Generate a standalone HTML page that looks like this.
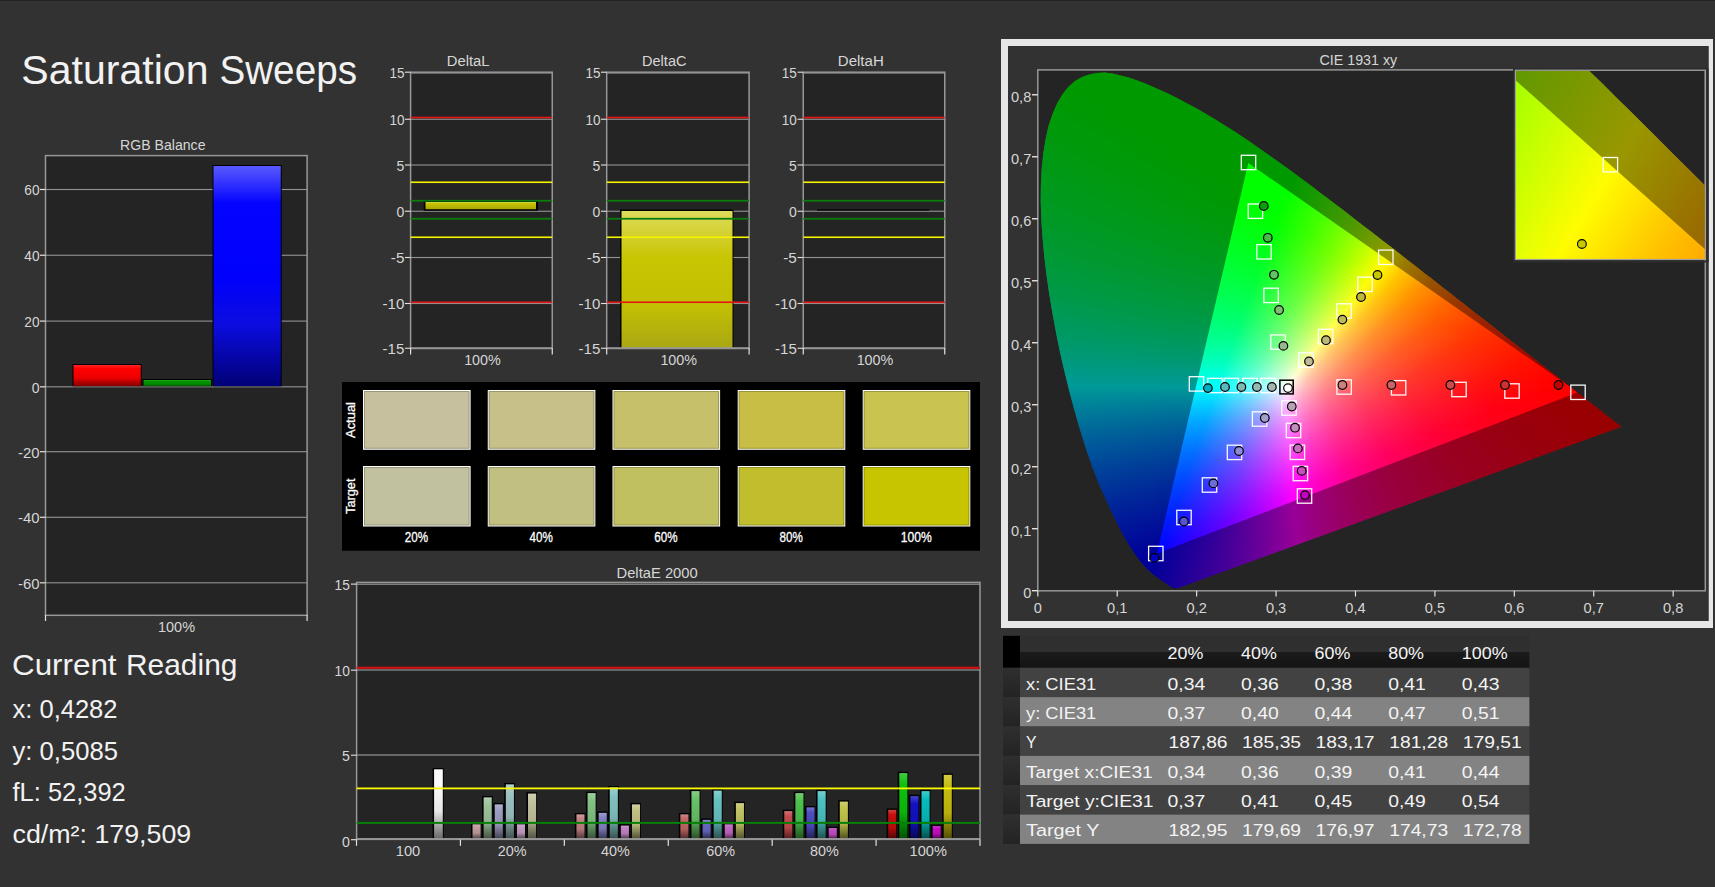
<!DOCTYPE html><html><head><meta charset="utf-8"><title>Saturation Sweeps</title><style>html,body{margin:0;padding:0;background:#323232;overflow:hidden}#p{position:relative;width:1715px;height:887px;overflow:hidden;background:#323232}.cg{position:absolute}.cg>div{position:absolute;left:0;width:100%}</style></head><body><div id="p"><svg width="1715" height="887" viewBox="0 0 1715 887" style="position:absolute;left:0;top:0;font-family:'Liberation Sans', sans-serif"><defs><linearGradient id="gR" x1="0" y1="0" x2="0" y2="1"><stop offset="0" stop-color="rgb(255,38,38)"/><stop offset=".18" stop-color="rgb(255,0,0)"/><stop offset=".6" stop-color="rgb(237,0,0)"/><stop offset="1" stop-color="rgb(128,0,0)"/></linearGradient><linearGradient id="gG" x1="0" y1="0" x2="0" y2="1"><stop offset="0" stop-color="rgb(51,171,51)"/><stop offset=".18" stop-color="rgb(0,150,0)"/><stop offset=".6" stop-color="rgb(0,139,0)"/><stop offset="1" stop-color="rgb(0,90,0)"/></linearGradient><linearGradient id="gB" x1="0" y1="0" x2="0" y2="1"><stop offset="0" stop-color="#5a5aff"/><stop offset=".17" stop-color="#0303ff"/><stop offset=".5" stop-color="#0000fd"/><stop offset=".72" stop-color="#0c0ce0"/><stop offset="1" stop-color="#000076"/></linearGradient><linearGradient id="gY" x1="0" y1="0" x2="0" y2="1"><stop offset="0" stop-color="rgb(220,218,97)"/><stop offset=".18" stop-color="rgb(199,196,0)"/><stop offset=".6" stop-color="rgb(185,182,0)"/><stop offset="1" stop-color="rgb(163,161,0)"/></linearGradient><linearGradient id="gYc" x1="0" y1="0" x2="0" y2="1"><stop offset="0" stop-color="#dedc5c"/><stop offset=".34" stop-color="#c8c503"/><stop offset=".68" stop-color="#c3c003"/><stop offset="1" stop-color="#a9a714"/></linearGradient><linearGradient id="e20r" x1="0" y1="0" x2="0" y2="1"><stop offset="0" stop-color="rgb(207,178,178)"/><stop offset=".18" stop-color="rgb(193,156,156)"/><stop offset=".6" stop-color="rgb(179,145,145)"/><stop offset="1" stop-color="rgb(81,66,66)"/></linearGradient><linearGradient id="e20g" x1="0" y1="0" x2="0" y2="1"><stop offset="0" stop-color="rgb(178,207,178)"/><stop offset=".18" stop-color="rgb(156,193,156)"/><stop offset=".6" stop-color="rgb(145,179,145)"/><stop offset="1" stop-color="rgb(66,81,66)"/></linearGradient><linearGradient id="e20b" x1="0" y1="0" x2="0" y2="1"><stop offset="0" stop-color="rgb(178,178,207)"/><stop offset=".18" stop-color="rgb(156,156,193)"/><stop offset=".6" stop-color="rgb(145,145,179)"/><stop offset="1" stop-color="rgb(66,66,81)"/></linearGradient><linearGradient id="e20c" x1="0" y1="0" x2="0" y2="1"><stop offset="0" stop-color="rgb(178,207,207)"/><stop offset=".18" stop-color="rgb(156,193,193)"/><stop offset=".6" stop-color="rgb(145,179,179)"/><stop offset="1" stop-color="rgb(66,81,81)"/></linearGradient><linearGradient id="e20m" x1="0" y1="0" x2="0" y2="1"><stop offset="0" stop-color="rgb(207,178,207)"/><stop offset=".18" stop-color="rgb(193,156,193)"/><stop offset=".6" stop-color="rgb(179,145,179)"/><stop offset="1" stop-color="rgb(81,66,81)"/></linearGradient><linearGradient id="e20y" x1="0" y1="0" x2="0" y2="1"><stop offset="0" stop-color="rgb(207,207,178)"/><stop offset=".18" stop-color="rgb(193,193,156)"/><stop offset=".6" stop-color="rgb(179,179,145)"/><stop offset="1" stop-color="rgb(81,81,66)"/></linearGradient><linearGradient id="e40r" x1="0" y1="0" x2="0" y2="1"><stop offset="0" stop-color="rgb(207,158,158)"/><stop offset=".18" stop-color="rgb(193,130,130)"/><stop offset=".6" stop-color="rgb(179,120,120)"/><stop offset="1" stop-color="rgb(81,55,55)"/></linearGradient><linearGradient id="e40g" x1="0" y1="0" x2="0" y2="1"><stop offset="0" stop-color="rgb(158,207,158)"/><stop offset=".18" stop-color="rgb(130,193,130)"/><stop offset=".6" stop-color="rgb(120,179,120)"/><stop offset="1" stop-color="rgb(55,81,55)"/></linearGradient><linearGradient id="e40b" x1="0" y1="0" x2="0" y2="1"><stop offset="0" stop-color="rgb(158,158,207)"/><stop offset=".18" stop-color="rgb(130,130,193)"/><stop offset=".6" stop-color="rgb(120,120,179)"/><stop offset="1" stop-color="rgb(55,55,81)"/></linearGradient><linearGradient id="e40c" x1="0" y1="0" x2="0" y2="1"><stop offset="0" stop-color="rgb(158,207,207)"/><stop offset=".18" stop-color="rgb(130,193,193)"/><stop offset=".6" stop-color="rgb(120,179,179)"/><stop offset="1" stop-color="rgb(55,81,81)"/></linearGradient><linearGradient id="e40m" x1="0" y1="0" x2="0" y2="1"><stop offset="0" stop-color="rgb(207,158,207)"/><stop offset=".18" stop-color="rgb(193,130,193)"/><stop offset=".6" stop-color="rgb(179,120,179)"/><stop offset="1" stop-color="rgb(81,55,81)"/></linearGradient><linearGradient id="e40y" x1="0" y1="0" x2="0" y2="1"><stop offset="0" stop-color="rgb(207,207,158)"/><stop offset=".18" stop-color="rgb(193,193,130)"/><stop offset=".6" stop-color="rgb(179,179,120)"/><stop offset="1" stop-color="rgb(81,81,55)"/></linearGradient><linearGradient id="e60r" x1="0" y1="0" x2="0" y2="1"><stop offset="0" stop-color="rgb(207,136,136)"/><stop offset=".18" stop-color="rgb(193,103,103)"/><stop offset=".6" stop-color="rgb(179,95,95)"/><stop offset="1" stop-color="rgb(81,43,43)"/></linearGradient><linearGradient id="e60g" x1="0" y1="0" x2="0" y2="1"><stop offset="0" stop-color="rgb(136,207,136)"/><stop offset=".18" stop-color="rgb(103,193,103)"/><stop offset=".6" stop-color="rgb(95,179,95)"/><stop offset="1" stop-color="rgb(43,81,43)"/></linearGradient><linearGradient id="e60b" x1="0" y1="0" x2="0" y2="1"><stop offset="0" stop-color="rgb(136,136,207)"/><stop offset=".18" stop-color="rgb(103,103,193)"/><stop offset=".6" stop-color="rgb(95,95,179)"/><stop offset="1" stop-color="rgb(43,43,81)"/></linearGradient><linearGradient id="e60c" x1="0" y1="0" x2="0" y2="1"><stop offset="0" stop-color="rgb(136,207,207)"/><stop offset=".18" stop-color="rgb(103,193,193)"/><stop offset=".6" stop-color="rgb(95,179,179)"/><stop offset="1" stop-color="rgb(43,81,81)"/></linearGradient><linearGradient id="e60m" x1="0" y1="0" x2="0" y2="1"><stop offset="0" stop-color="rgb(207,136,207)"/><stop offset=".18" stop-color="rgb(193,103,193)"/><stop offset=".6" stop-color="rgb(179,95,179)"/><stop offset="1" stop-color="rgb(81,43,81)"/></linearGradient><linearGradient id="e60y" x1="0" y1="0" x2="0" y2="1"><stop offset="0" stop-color="rgb(207,207,136)"/><stop offset=".18" stop-color="rgb(193,193,103)"/><stop offset=".6" stop-color="rgb(179,179,95)"/><stop offset="1" stop-color="rgb(81,81,43)"/></linearGradient><linearGradient id="e80r" x1="0" y1="0" x2="0" y2="1"><stop offset="0" stop-color="rgb(207,115,115)"/><stop offset=".18" stop-color="rgb(193,76,76)"/><stop offset=".6" stop-color="rgb(179,70,70)"/><stop offset="1" stop-color="rgb(81,32,32)"/></linearGradient><linearGradient id="e80g" x1="0" y1="0" x2="0" y2="1"><stop offset="0" stop-color="rgb(115,207,115)"/><stop offset=".18" stop-color="rgb(76,193,76)"/><stop offset=".6" stop-color="rgb(70,179,70)"/><stop offset="1" stop-color="rgb(32,81,32)"/></linearGradient><linearGradient id="e80b" x1="0" y1="0" x2="0" y2="1"><stop offset="0" stop-color="rgb(115,115,207)"/><stop offset=".18" stop-color="rgb(76,76,193)"/><stop offset=".6" stop-color="rgb(70,70,179)"/><stop offset="1" stop-color="rgb(32,32,81)"/></linearGradient><linearGradient id="e80c" x1="0" y1="0" x2="0" y2="1"><stop offset="0" stop-color="rgb(115,207,207)"/><stop offset=".18" stop-color="rgb(76,193,193)"/><stop offset=".6" stop-color="rgb(70,179,179)"/><stop offset="1" stop-color="rgb(32,81,81)"/></linearGradient><linearGradient id="e80m" x1="0" y1="0" x2="0" y2="1"><stop offset="0" stop-color="rgb(207,115,207)"/><stop offset=".18" stop-color="rgb(193,76,193)"/><stop offset=".6" stop-color="rgb(179,70,179)"/><stop offset="1" stop-color="rgb(81,32,81)"/></linearGradient><linearGradient id="e80y" x1="0" y1="0" x2="0" y2="1"><stop offset="0" stop-color="rgb(207,207,115)"/><stop offset=".18" stop-color="rgb(193,193,76)"/><stop offset=".6" stop-color="rgb(179,179,70)"/><stop offset="1" stop-color="rgb(81,81,32)"/></linearGradient><linearGradient id="e100r" x1="0" y1="0" x2="0" y2="1"><stop offset="0" stop-color="rgb(211,65,65)"/><stop offset=".18" stop-color="rgb(198,12,12)"/><stop offset=".6" stop-color="rgb(184,11,11)"/><stop offset="1" stop-color="rgb(83,5,5)"/></linearGradient><linearGradient id="e100g" x1="0" y1="0" x2="0" y2="1"><stop offset="0" stop-color="rgb(65,206,65)"/><stop offset=".18" stop-color="rgb(12,192,12)"/><stop offset=".6" stop-color="rgb(11,178,11)"/><stop offset="1" stop-color="rgb(5,81,5)"/></linearGradient><linearGradient id="e100b" x1="0" y1="0" x2="0" y2="1"><stop offset="0" stop-color="rgb(70,70,208)"/><stop offset=".18" stop-color="rgb(18,18,195)"/><stop offset=".6" stop-color="rgb(16,16,181)"/><stop offset="1" stop-color="rgb(8,8,82)"/></linearGradient><linearGradient id="e100c" x1="0" y1="0" x2="0" y2="1"><stop offset="0" stop-color="rgb(62,203,203)"/><stop offset=".18" stop-color="rgb(8,188,188)"/><stop offset=".6" stop-color="rgb(7,174,174)"/><stop offset="1" stop-color="rgb(3,79,79)"/></linearGradient><linearGradient id="e100m" x1="0" y1="0" x2="0" y2="1"><stop offset="0" stop-color="rgb(211,65,211)"/><stop offset=".18" stop-color="rgb(198,12,198)"/><stop offset=".6" stop-color="rgb(184,11,184)"/><stop offset="1" stop-color="rgb(83,5,83)"/></linearGradient><linearGradient id="e100y" x1="0" y1="0" x2="0" y2="1"><stop offset="0" stop-color="rgb(211,203,67)"/><stop offset=".18" stop-color="rgb(198,188,14)"/><stop offset=".6" stop-color="rgb(184,174,13)"/><stop offset="1" stop-color="rgb(83,79,6)"/></linearGradient><linearGradient id="eW" x1="0" y1="0" x2="0" y2="1"><stop offset="0" stop-color="rgb(250,250,250)"/><stop offset=".18" stop-color="rgb(250,250,250)"/><stop offset=".6" stop-color="rgb(232,232,232)"/><stop offset="1" stop-color="rgb(105,105,105)"/></linearGradient><linearGradient id="th" x1="0" y1="0" x2="0" y2="1"><stop offset="0" stop-color="#2e2e2e"/><stop offset=".49" stop-color="#303030"/><stop offset=".5" stop-color="#1b1b1b"/><stop offset="1" stop-color="#141414"/></linearGradient><linearGradient id="rh" x1="0" y1="0" x2="0" y2="1"><stop offset="0" stop-color="#2f2f2f"/><stop offset="1" stop-color="#232323"/></linearGradient></defs><rect x="0" y="0" width="1715" height="887" fill="#323232"/><rect x="0" y="0" width="1715" height="1" fill="#232323"/><text y="84.2" font-size="40" fill="#f2f2f2"><tspan x="21.3" textLength="198.6" lengthAdjust="spacingAndGlyphs">Saturation </tspan><tspan x="219.4" textLength="137.6" lengthAdjust="spacingAndGlyphs">Sweeps</tspan></text><rect x="45.5" y="155.6" width="261.6" height="459.7" fill="#242424"/><rect x="45.5" y="188.95" width="261.6" height="1.1" fill="#939393"/><rect x="45.5" y="254.7" width="261.6" height="1.1" fill="#939393"/><rect x="45.5" y="320.55" width="261.6" height="1.1" fill="#939393"/><rect x="45.5" y="386.25" width="261.6" height="1.1" fill="#939393"/><rect x="45.5" y="451.15" width="261.6" height="1.1" fill="#939393"/><rect x="45.5" y="516.75" width="261.6" height="1.1" fill="#939393"/><rect x="45.5" y="582.25" width="261.6" height="1.1" fill="#939393"/><rect x="72.5" y="364" width="69.25" height="22.2" fill="#000"/><rect x="73.5" y="365" width="67.25" height="21.2" fill="url(#gR)"/><rect x="142.5" y="379" width="69.5" height="7.2" fill="#000"/><rect x="143.5" y="380" width="67.5" height="6.2" fill="url(#gG)"/><rect x="212.5" y="165" width="69.25" height="221.2" fill="#000"/><rect x="213.5" y="166" width="67.25" height="220.2" fill="url(#gB)"/><rect x="45.5" y="155.6" width="261.6" height="459.7" fill="none" stroke="#979797" stroke-width="1.5"/><rect x="40" y="188.9" width="5.5" height="1.2" fill="#e2e2e2"/><text x="24.3" y="195.3" font-size="15.2" fill="#d6d6d6" textLength="15.2" lengthAdjust="spacingAndGlyphs">60</text><rect x="40" y="254.65" width="5.5" height="1.2" fill="#e2e2e2"/><text x="24.3" y="261.05" font-size="15.2" fill="#d6d6d6" textLength="15.2" lengthAdjust="spacingAndGlyphs">40</text><rect x="40" y="320.5" width="5.5" height="1.2" fill="#e2e2e2"/><text x="24.3" y="326.9" font-size="15.2" fill="#d6d6d6" textLength="15.2" lengthAdjust="spacingAndGlyphs">20</text><rect x="40" y="386.2" width="5.5" height="1.2" fill="#e2e2e2"/><text x="31.7" y="392.6" font-size="15.2" fill="#d6d6d6" textLength="7.8" lengthAdjust="spacingAndGlyphs">0</text><rect x="40" y="451.1" width="5.5" height="1.2" fill="#e2e2e2"/><text x="18" y="457.5" font-size="15.2" fill="#d6d6d6" textLength="21.5" lengthAdjust="spacingAndGlyphs">-20</text><rect x="40" y="516.7" width="5.5" height="1.2" fill="#e2e2e2"/><text x="18" y="523.1" font-size="15.2" fill="#d6d6d6" textLength="21.5" lengthAdjust="spacingAndGlyphs">-40</text><rect x="40" y="582.2" width="5.5" height="1.2" fill="#e2e2e2"/><text x="18" y="588.6" font-size="15.2" fill="#d6d6d6" textLength="21.5" lengthAdjust="spacingAndGlyphs">-60</text><rect x="44.9" y="615" width="1.2" height="6" fill="#e2e2e2"/><rect x="306.5" y="615" width="1.2" height="6" fill="#e2e2e2"/><text x="158" y="632" font-size="15" fill="#d6d6d6" textLength="37" lengthAdjust="spacingAndGlyphs">100%</text><text x="120" y="150" font-size="15.2" fill="#d6d6d6" textLength="85.5" lengthAdjust="spacingAndGlyphs">RGB Balance</text><text y="675" font-size="30" fill="#f2f2f2"><tspan x="12" textLength="113.3" lengthAdjust="spacingAndGlyphs">Current </tspan><tspan x="126" textLength="111.4" lengthAdjust="spacingAndGlyphs">Reading</tspan></text><text x="12.5" y="717.5" font-size="25" fill="#f2f2f2" textLength="105" lengthAdjust="spacingAndGlyphs">x: 0,4282</text><text x="12.5" y="759.5" font-size="25" fill="#f2f2f2" textLength="105.5" lengthAdjust="spacingAndGlyphs">y: 0,5085</text><text x="12.5" y="801.25" font-size="25" fill="#f2f2f2" textLength="113.25" lengthAdjust="spacingAndGlyphs">fL: 52,392</text><text x="12.5" y="843.25" font-size="25" fill="#f2f2f2" textLength="178.75" lengthAdjust="spacingAndGlyphs">cd/m²: 179,509</text><rect x="410.6" y="72.2" width="141.65" height="276.05" fill="#242424"/><rect x="410.6" y="72.6" width="141.65" height="1" fill="#939393"/><rect x="410.6" y="118.7" width="141.65" height="1.1" fill="#939393"/><rect x="410.6" y="164.45" width="141.65" height="1.1" fill="#939393"/><rect x="410.6" y="210.7" width="141.65" height="1.1" fill="#939393"/><rect x="410.6" y="256.95" width="141.65" height="1.1" fill="#939393"/><rect x="410.6" y="302.95" width="141.65" height="1.1" fill="#939393"/><rect x="423.75" y="200.75" width="114.25" height="10" fill="#000"/><rect x="425.5" y="202" width="110.5" height="7.25" fill="url(#gY)"/><rect x="410.6" y="72.2" width="141.65" height="276.05" fill="none" stroke="#979797" stroke-width="1.5"/><rect x="410.6" y="347.35" width="141.65" height="1.9" fill="#979797"/><rect x="410.6" y="116.7" width="141.65" height="1.6" fill="#e31616"/><rect x="410.6" y="301.45" width="141.65" height="1.6" fill="#e31616"/><rect x="410.6" y="181.45" width="141.65" height="1.6" fill="#f4f400"/><rect x="410.6" y="236.45" width="141.65" height="1.6" fill="#f4f400"/><rect x="410.6" y="199.85" width="141.65" height="1.8" fill="#0c7d0c"/><rect x="410.6" y="217.85" width="141.65" height="1.8" fill="#0c7d0c"/><rect x="404.9" y="71.65" width="5.7" height="1.1" fill="#e2e2e2"/><text x="389.4" y="77.9" font-size="15.2" fill="#d6d6d6" textLength="15" lengthAdjust="spacingAndGlyphs">15</text><rect x="404.9" y="118.7" width="5.7" height="1.1" fill="#e2e2e2"/><text x="389.4" y="124.95" font-size="15.2" fill="#d6d6d6" textLength="15" lengthAdjust="spacingAndGlyphs">10</text><rect x="404.9" y="164.45" width="5.7" height="1.1" fill="#e2e2e2"/><text x="396.6" y="170.7" font-size="15.2" fill="#d6d6d6" textLength="7.8" lengthAdjust="spacingAndGlyphs">5</text><rect x="404.9" y="210.7" width="5.7" height="1.1" fill="#e2e2e2"/><text x="396.6" y="216.95" font-size="15.2" fill="#d6d6d6" textLength="7.8" lengthAdjust="spacingAndGlyphs">0</text><rect x="404.9" y="256.95" width="5.7" height="1.1" fill="#e2e2e2"/><text x="390.8" y="263.2" font-size="15.2" fill="#d6d6d6" textLength="13.6" lengthAdjust="spacingAndGlyphs">-5</text><rect x="404.9" y="302.95" width="5.7" height="1.1" fill="#e2e2e2"/><text x="382.6" y="309.2" font-size="15.2" fill="#d6d6d6" textLength="21.8" lengthAdjust="spacingAndGlyphs">-10</text><rect x="404.9" y="347.7" width="5.7" height="1.1" fill="#e2e2e2"/><text x="382.6" y="353.95" font-size="15.2" fill="#d6d6d6" textLength="21.8" lengthAdjust="spacingAndGlyphs">-15</text><rect x="410" y="348" width="1.2" height="6.5" fill="#e2e2e2"/><rect x="551.65" y="348" width="1.2" height="6.5" fill="#e2e2e2"/><text x="446.75" y="66.2" font-size="15.3" fill="#d6d6d6" textLength="42.75" lengthAdjust="spacingAndGlyphs">DeltaL</text><text x="464.15" y="364.8" font-size="15" fill="#d6d6d6" textLength="36.7" lengthAdjust="spacingAndGlyphs">100%</text><rect x="606.7" y="72.2" width="142.4" height="276.05" fill="#242424"/><rect x="606.7" y="72.6" width="142.4" height="1" fill="#939393"/><rect x="606.7" y="118.7" width="142.4" height="1.1" fill="#939393"/><rect x="606.7" y="164.45" width="142.4" height="1.1" fill="#939393"/><rect x="606.7" y="210.7" width="142.4" height="1.1" fill="#939393"/><rect x="606.7" y="256.95" width="142.4" height="1.1" fill="#939393"/><rect x="606.7" y="302.95" width="142.4" height="1.1" fill="#939393"/><rect x="620" y="209.5" width="113.5" height="138.75" fill="#000"/><rect x="621.5" y="211" width="111" height="137.25" fill="url(#gYc)"/><rect x="606.7" y="72.2" width="142.4" height="276.05" fill="none" stroke="#979797" stroke-width="1.5"/><rect x="606.7" y="347.35" width="142.4" height="1.9" fill="#979797"/><rect x="606.7" y="116.7" width="142.4" height="1.6" fill="#e31616"/><rect x="606.7" y="301.45" width="142.4" height="1.6" fill="#e31616"/><rect x="606.7" y="181.45" width="142.4" height="1.6" fill="#f4f400"/><rect x="606.7" y="236.45" width="142.4" height="1.6" fill="#f4f400"/><rect x="606.7" y="199.85" width="142.4" height="1.8" fill="#0c7d0c"/><rect x="606.7" y="217.85" width="142.4" height="1.8" fill="#0c7d0c"/><rect x="601" y="71.65" width="5.7" height="1.1" fill="#e2e2e2"/><text x="585.4" y="77.9" font-size="15.2" fill="#d6d6d6" textLength="15" lengthAdjust="spacingAndGlyphs">15</text><rect x="601" y="118.7" width="5.7" height="1.1" fill="#e2e2e2"/><text x="585.4" y="124.95" font-size="15.2" fill="#d6d6d6" textLength="15" lengthAdjust="spacingAndGlyphs">10</text><rect x="601" y="164.45" width="5.7" height="1.1" fill="#e2e2e2"/><text x="592.6" y="170.7" font-size="15.2" fill="#d6d6d6" textLength="7.8" lengthAdjust="spacingAndGlyphs">5</text><rect x="601" y="210.7" width="5.7" height="1.1" fill="#e2e2e2"/><text x="592.6" y="216.95" font-size="15.2" fill="#d6d6d6" textLength="7.8" lengthAdjust="spacingAndGlyphs">0</text><rect x="601" y="256.95" width="5.7" height="1.1" fill="#e2e2e2"/><text x="586.8" y="263.2" font-size="15.2" fill="#d6d6d6" textLength="13.6" lengthAdjust="spacingAndGlyphs">-5</text><rect x="601" y="302.95" width="5.7" height="1.1" fill="#e2e2e2"/><text x="578.6" y="309.2" font-size="15.2" fill="#d6d6d6" textLength="21.8" lengthAdjust="spacingAndGlyphs">-10</text><rect x="601" y="347.7" width="5.7" height="1.1" fill="#e2e2e2"/><text x="578.6" y="353.95" font-size="15.2" fill="#d6d6d6" textLength="21.8" lengthAdjust="spacingAndGlyphs">-15</text><rect x="606.1" y="348" width="1.2" height="6.5" fill="#e2e2e2"/><rect x="748.5" y="348" width="1.2" height="6.5" fill="#e2e2e2"/><text x="642" y="66.2" font-size="15.3" fill="#d6d6d6" textLength="44.5" lengthAdjust="spacingAndGlyphs">DeltaC</text><text x="660.4" y="364.8" font-size="15" fill="#d6d6d6" textLength="36.7" lengthAdjust="spacingAndGlyphs">100%</text><rect x="803.25" y="72.2" width="141.5" height="276.05" fill="#242424"/><rect x="803.25" y="72.6" width="141.5" height="1" fill="#939393"/><rect x="803.25" y="118.7" width="141.5" height="1.1" fill="#939393"/><rect x="803.25" y="164.45" width="141.5" height="1.1" fill="#939393"/><rect x="803.25" y="210.7" width="141.5" height="1.1" fill="#939393"/><rect x="803.25" y="256.95" width="141.5" height="1.1" fill="#939393"/><rect x="803.25" y="302.95" width="141.5" height="1.1" fill="#939393"/><rect x="817" y="209.4" width="112.25" height="1.2" fill="#000"/><rect x="803.25" y="72.2" width="141.5" height="276.05" fill="none" stroke="#979797" stroke-width="1.5"/><rect x="803.25" y="347.35" width="141.5" height="1.9" fill="#979797"/><rect x="803.25" y="116.7" width="141.5" height="1.6" fill="#e31616"/><rect x="803.25" y="301.45" width="141.5" height="1.6" fill="#e31616"/><rect x="803.25" y="181.45" width="141.5" height="1.6" fill="#f4f400"/><rect x="803.25" y="236.45" width="141.5" height="1.6" fill="#f4f400"/><rect x="803.25" y="199.85" width="141.5" height="1.8" fill="#0c7d0c"/><rect x="803.25" y="217.85" width="141.5" height="1.8" fill="#0c7d0c"/><rect x="797.55" y="71.65" width="5.7" height="1.1" fill="#e2e2e2"/><text x="781.8" y="77.9" font-size="15.2" fill="#d6d6d6" textLength="15" lengthAdjust="spacingAndGlyphs">15</text><rect x="797.55" y="118.7" width="5.7" height="1.1" fill="#e2e2e2"/><text x="781.8" y="124.95" font-size="15.2" fill="#d6d6d6" textLength="15" lengthAdjust="spacingAndGlyphs">10</text><rect x="797.55" y="164.45" width="5.7" height="1.1" fill="#e2e2e2"/><text x="789" y="170.7" font-size="15.2" fill="#d6d6d6" textLength="7.8" lengthAdjust="spacingAndGlyphs">5</text><rect x="797.55" y="210.7" width="5.7" height="1.1" fill="#e2e2e2"/><text x="789" y="216.95" font-size="15.2" fill="#d6d6d6" textLength="7.8" lengthAdjust="spacingAndGlyphs">0</text><rect x="797.55" y="256.95" width="5.7" height="1.1" fill="#e2e2e2"/><text x="783.2" y="263.2" font-size="15.2" fill="#d6d6d6" textLength="13.6" lengthAdjust="spacingAndGlyphs">-5</text><rect x="797.55" y="302.95" width="5.7" height="1.1" fill="#e2e2e2"/><text x="775" y="309.2" font-size="15.2" fill="#d6d6d6" textLength="21.8" lengthAdjust="spacingAndGlyphs">-10</text><rect x="797.55" y="347.7" width="5.7" height="1.1" fill="#e2e2e2"/><text x="775" y="353.95" font-size="15.2" fill="#d6d6d6" textLength="21.8" lengthAdjust="spacingAndGlyphs">-15</text><rect x="802.65" y="348" width="1.2" height="6.5" fill="#e2e2e2"/><rect x="944.15" y="348" width="1.2" height="6.5" fill="#e2e2e2"/><text x="837.8" y="66.2" font-size="15.3" fill="#d6d6d6" textLength="46" lengthAdjust="spacingAndGlyphs">DeltaH</text><text x="856.65" y="364.8" font-size="15" fill="#d6d6d6" textLength="36.7" lengthAdjust="spacingAndGlyphs">100%</text><rect x="342" y="382" width="638" height="168.75" fill="#000"/><rect x="363.5" y="390.5" width="106.6" height="58.75" fill="#c6c09f" stroke="#fff" stroke-width="1"/><rect x="364.5" y="391.5" width="104.6" height="56.75" fill="none" stroke="#000" stroke-opacity=".22" stroke-width="1"/><rect x="363.5" y="466.5" width="106.6" height="59.5" fill="#c1c19f" stroke="#fff" stroke-width="1"/><rect x="364.5" y="467.5" width="104.6" height="57.5" fill="none" stroke="#000" stroke-opacity=".22" stroke-width="1"/><text x="404.85" y="542" font-size="14" fill="#fff" textLength="23.3" lengthAdjust="spacingAndGlyphs" stroke="#fff" stroke-width=".3">20%</text><rect x="488.25" y="390.5" width="106.6" height="58.75" fill="#c7c088" stroke="#fff" stroke-width="1"/><rect x="489.25" y="391.5" width="104.6" height="56.75" fill="none" stroke="#000" stroke-opacity=".22" stroke-width="1"/><rect x="488.25" y="466.5" width="106.6" height="59.5" fill="#c1c080" stroke="#fff" stroke-width="1"/><rect x="489.25" y="467.5" width="104.6" height="57.5" fill="none" stroke="#000" stroke-opacity=".22" stroke-width="1"/><text x="529.6" y="542" font-size="14" fill="#fff" textLength="23.3" lengthAdjust="spacingAndGlyphs" stroke="#fff" stroke-width=".3">40%</text><rect x="613" y="390.5" width="106.6" height="58.75" fill="#c7c06a" stroke="#fff" stroke-width="1"/><rect x="614" y="391.5" width="104.6" height="56.75" fill="none" stroke="#000" stroke-opacity=".22" stroke-width="1"/><rect x="613" y="466.5" width="106.6" height="59.5" fill="#c1c060" stroke="#fff" stroke-width="1"/><rect x="614" y="467.5" width="104.6" height="57.5" fill="none" stroke="#000" stroke-opacity=".22" stroke-width="1"/><text x="654.35" y="542" font-size="14" fill="#fff" textLength="23.3" lengthAdjust="spacingAndGlyphs" stroke="#fff" stroke-width=".3">60%</text><rect x="738.2" y="390.5" width="106.6" height="58.75" fill="#c8be45" stroke="#fff" stroke-width="1"/><rect x="739.2" y="391.5" width="104.6" height="56.75" fill="none" stroke="#000" stroke-opacity=".22" stroke-width="1"/><rect x="738.2" y="466.5" width="106.6" height="59.5" fill="#c1be2e" stroke="#fff" stroke-width="1"/><rect x="739.2" y="467.5" width="104.6" height="57.5" fill="none" stroke="#000" stroke-opacity=".22" stroke-width="1"/><text x="779.55" y="542" font-size="14" fill="#fff" textLength="23.3" lengthAdjust="spacingAndGlyphs" stroke="#fff" stroke-width=".3">80%</text><rect x="863.2" y="390.5" width="106.6" height="58.75" fill="#c9c350" stroke="#fff" stroke-width="1"/><rect x="864.2" y="391.5" width="104.6" height="56.75" fill="none" stroke="#000" stroke-opacity=".22" stroke-width="1"/><rect x="863.2" y="466.5" width="106.6" height="59.5" fill="#c7c400" stroke="#fff" stroke-width="1"/><rect x="864.2" y="467.5" width="104.6" height="57.5" fill="none" stroke="#000" stroke-opacity=".22" stroke-width="1"/><text x="900.7" y="542" font-size="14" fill="#fff" textLength="31" lengthAdjust="spacingAndGlyphs" stroke="#fff" stroke-width=".3">100%</text><text transform="translate(355.3,438) rotate(-90)" font-size="13.3" fill="#fff" stroke="#fff" stroke-width=".3" textLength="36" lengthAdjust="spacingAndGlyphs">Actual</text><text transform="translate(355.3,514) rotate(-90)" font-size="13.3" fill="#fff" stroke="#fff" stroke-width=".3" textLength="35.5" lengthAdjust="spacingAndGlyphs">Target</text><rect x="356.6" y="582.4" width="623.4" height="256.7" fill="#242424"/><rect x="356.6" y="583.6" width="623.4" height="1.2" fill="#939393"/><rect x="356.6" y="669.4" width="623.4" height="1.2" fill="#939393"/><rect x="356.6" y="754.4" width="623.4" height="1.2" fill="#939393"/><rect x="470.92" y="822.95" width="10.6" height="15.65" fill="#000"/><rect x="472.52" y="824.35" width="8.1" height="14.25" fill="url(#e20r)"/><rect x="482.02" y="795.95" width="10.6" height="42.65" fill="#000"/><rect x="483.62" y="797.35" width="8.1" height="41.25" fill="url(#e20g)"/><rect x="493.12" y="802.95" width="10.6" height="35.65" fill="#000"/><rect x="494.72" y="804.35" width="8.1" height="34.25" fill="url(#e20b)"/><rect x="504.22" y="782.95" width="10.6" height="55.65" fill="#000"/><rect x="505.82" y="784.35" width="8.1" height="54.25" fill="url(#e20c)"/><rect x="515.32" y="822.95" width="10.6" height="15.65" fill="#000"/><rect x="516.92" y="824.35" width="8.1" height="14.25" fill="url(#e20m)"/><rect x="526.42" y="792.2" width="10.6" height="46.4" fill="#000"/><rect x="528.02" y="793.6" width="8.1" height="45" fill="url(#e20y)"/><rect x="574.84" y="812.95" width="10.6" height="25.65" fill="#000"/><rect x="576.44" y="814.35" width="8.1" height="24.25" fill="url(#e40r)"/><rect x="585.94" y="791.7" width="10.6" height="46.9" fill="#000"/><rect x="587.54" y="793.1" width="8.1" height="45.5" fill="url(#e40g)"/><rect x="597.04" y="811.45" width="10.6" height="27.15" fill="#000"/><rect x="598.64" y="812.85" width="8.1" height="25.75" fill="url(#e40b)"/><rect x="608.14" y="785.95" width="10.6" height="52.65" fill="#000"/><rect x="609.74" y="787.35" width="8.1" height="51.25" fill="url(#e40c)"/><rect x="619.24" y="824.2" width="10.6" height="14.4" fill="#000"/><rect x="620.84" y="825.6" width="8.1" height="13" fill="url(#e40m)"/><rect x="630.34" y="802.95" width="10.6" height="35.65" fill="#000"/><rect x="631.94" y="804.35" width="8.1" height="34.25" fill="url(#e40y)"/><rect x="678.76" y="812.95" width="10.6" height="25.65" fill="#000"/><rect x="680.36" y="814.35" width="8.1" height="24.25" fill="url(#e60r)"/><rect x="689.86" y="789.7" width="10.6" height="48.9" fill="#000"/><rect x="691.46" y="791.1" width="8.1" height="47.5" fill="url(#e60g)"/><rect x="700.96" y="818.45" width="10.6" height="20.15" fill="#000"/><rect x="702.56" y="819.85" width="8.1" height="18.75" fill="url(#e60b)"/><rect x="712.06" y="789.2" width="10.6" height="49.4" fill="#000"/><rect x="713.66" y="790.6" width="8.1" height="48" fill="url(#e60c)"/><rect x="723.16" y="822.95" width="10.6" height="15.65" fill="#000"/><rect x="724.76" y="824.35" width="8.1" height="14.25" fill="url(#e60m)"/><rect x="734.26" y="801.7" width="10.6" height="36.9" fill="#000"/><rect x="735.86" y="803.1" width="8.1" height="35.5" fill="url(#e60y)"/><rect x="782.68" y="809.7" width="10.6" height="28.9" fill="#000"/><rect x="784.28" y="811.1" width="8.1" height="27.5" fill="url(#e80r)"/><rect x="793.78" y="791.7" width="10.6" height="46.9" fill="#000"/><rect x="795.38" y="793.1" width="8.1" height="45.5" fill="url(#e80g)"/><rect x="804.88" y="805.95" width="10.6" height="32.65" fill="#000"/><rect x="806.48" y="807.35" width="8.1" height="31.25" fill="url(#e80b)"/><rect x="815.98" y="789.7" width="10.6" height="48.9" fill="#000"/><rect x="817.58" y="791.1" width="8.1" height="47.5" fill="url(#e80c)"/><rect x="827.08" y="826.7" width="10.6" height="11.9" fill="#000"/><rect x="828.68" y="828.1" width="8.1" height="10.5" fill="url(#e80m)"/><rect x="838.18" y="800.2" width="10.6" height="38.4" fill="#000"/><rect x="839.78" y="801.6" width="8.1" height="37" fill="url(#e80y)"/><rect x="886.6" y="808.45" width="10.6" height="30.15" fill="#000"/><rect x="888.2" y="809.85" width="8.1" height="28.75" fill="url(#e100r)"/><rect x="897.7" y="771.7" width="10.6" height="66.9" fill="#000"/><rect x="899.3" y="773.1" width="8.1" height="65.5" fill="url(#e100g)"/><rect x="908.8" y="794.7" width="10.6" height="43.9" fill="#000"/><rect x="910.4" y="796.1" width="8.1" height="42.5" fill="url(#e100b)"/><rect x="919.9" y="789.7" width="10.6" height="48.9" fill="#000"/><rect x="921.5" y="791.1" width="8.1" height="47.5" fill="url(#e100c)"/><rect x="931" y="824.7" width="10.6" height="13.9" fill="#000"/><rect x="932.6" y="826.1" width="8.1" height="12.5" fill="url(#e100m)"/><rect x="942.1" y="773.45" width="10.6" height="65.15" fill="#000"/><rect x="943.7" y="774.85" width="8.1" height="63.75" fill="url(#e100y)"/><rect x="432.6" y="768" width="11.1" height="70.6" fill="#000"/><rect x="434.1" y="769.3" width="8.7" height="69.3" fill="url(#eW)"/><rect x="356.6" y="582.4" width="623.4" height="256.7" fill="none" stroke="#979797" stroke-width="1.5"/><rect x="356.6" y="838.1" width="623.4" height="2" fill="#979797"/><rect x="356.6" y="666.7" width="623.4" height="2.2" fill="#cc1212"/><rect x="356.6" y="787.5" width="623.4" height="1.8" fill="#fafa00"/><rect x="356.6" y="821.9" width="623.4" height="2" fill="#078007"/><rect x="351" y="583.55" width="5.6" height="1.1" fill="#e2e2e2"/><text x="334.5" y="590.05" font-size="15.2" fill="#d6d6d6" textLength="15.3" lengthAdjust="spacingAndGlyphs">15</text><rect x="351" y="669.65" width="5.6" height="1.1" fill="#e2e2e2"/><text x="334.5" y="676.3" font-size="15.2" fill="#d6d6d6" textLength="15.3" lengthAdjust="spacingAndGlyphs">10</text><rect x="351" y="754.65" width="5.6" height="1.1" fill="#e2e2e2"/><text x="341.9" y="761.4" font-size="15.2" fill="#d6d6d6" textLength="7.9" lengthAdjust="spacingAndGlyphs">5</text><rect x="351" y="839.15" width="5.6" height="1.1" fill="#e2e2e2"/><text x="341.9" y="847.3" font-size="15.2" fill="#d6d6d6" textLength="7.9" lengthAdjust="spacingAndGlyphs">0</text><rect x="355.9" y="839.5" width="1.2" height="6.3" fill="#e2e2e2"/><rect x="459.82" y="839.5" width="1.2" height="6.3" fill="#e2e2e2"/><rect x="563.74" y="839.5" width="1.2" height="6.3" fill="#e2e2e2"/><rect x="667.66" y="839.5" width="1.2" height="6.3" fill="#e2e2e2"/><rect x="771.58" y="839.5" width="1.2" height="6.3" fill="#e2e2e2"/><rect x="875.5" y="839.5" width="1.2" height="6.3" fill="#e2e2e2"/><rect x="979.42" y="839.5" width="1.2" height="6.3" fill="#e2e2e2"/><text x="395.75" y="856" font-size="15" fill="#d6d6d6" textLength="24.5" lengthAdjust="spacingAndGlyphs">100</text><text x="497.85" y="856" font-size="15" fill="#d6d6d6" textLength="28.8" lengthAdjust="spacingAndGlyphs">20%</text><text x="601.1" y="856" font-size="15" fill="#d6d6d6" textLength="28.8" lengthAdjust="spacingAndGlyphs">40%</text><text x="706.2" y="856" font-size="15" fill="#d6d6d6" textLength="28.8" lengthAdjust="spacingAndGlyphs">60%</text><text x="810.1" y="856" font-size="15" fill="#d6d6d6" textLength="28.8" lengthAdjust="spacingAndGlyphs">80%</text><text x="909.6" y="856" font-size="15" fill="#d6d6d6" textLength="37.3" lengthAdjust="spacingAndGlyphs">100%</text><text x="616.5" y="577.75" font-size="15.3" fill="#d6d6d6" textLength="81.25" lengthAdjust="spacingAndGlyphs">DeltaE 2000</text><rect x="1001" y="39" width="712" height="589" fill="#e6e6e6"/><rect x="1008" y="46" width="700.75" height="575" fill="#323232"/><rect x="1037.8" y="69.9" width="667.5" height="520.9" fill="#242424"/><rect x="1037.8" y="69.9" width="667.5" height="520.9" fill="none" stroke="#979797" stroke-width="1.5"/><rect x="1032" y="590" width="5.8" height="1.4" fill="#e2e2e2"/><text x="1023.2" y="597.5" font-size="15.2" fill="#d6d6d6" textLength="8.1" lengthAdjust="spacingAndGlyphs">0</text><rect x="1037.2" y="590.8" width="1.2" height="5.7" fill="#e2e2e2"/><text x="1033.75" y="612.7" font-size="15.2" fill="#d6d6d6" textLength="8.1" lengthAdjust="spacingAndGlyphs">0</text><rect x="1032" y="528.01" width="5.8" height="1.4" fill="#e2e2e2"/><text x="1011" y="535.51" font-size="15.2" fill="#d6d6d6" textLength="20.3" lengthAdjust="spacingAndGlyphs">0,1</text><rect x="1116.62" y="590.8" width="1.2" height="5.7" fill="#e2e2e2"/><text x="1107.07" y="612.7" font-size="15.2" fill="#d6d6d6" textLength="20.3" lengthAdjust="spacingAndGlyphs">0,1</text><rect x="1032" y="466.02" width="5.8" height="1.4" fill="#e2e2e2"/><text x="1011" y="473.52" font-size="15.2" fill="#d6d6d6" textLength="20.3" lengthAdjust="spacingAndGlyphs">0,2</text><rect x="1196.04" y="590.8" width="1.2" height="5.7" fill="#e2e2e2"/><text x="1186.49" y="612.7" font-size="15.2" fill="#d6d6d6" textLength="20.3" lengthAdjust="spacingAndGlyphs">0,2</text><rect x="1032" y="404.03" width="5.8" height="1.4" fill="#e2e2e2"/><text x="1011" y="411.53" font-size="15.2" fill="#d6d6d6" textLength="20.3" lengthAdjust="spacingAndGlyphs">0,3</text><rect x="1275.46" y="590.8" width="1.2" height="5.7" fill="#e2e2e2"/><text x="1265.91" y="612.7" font-size="15.2" fill="#d6d6d6" textLength="20.3" lengthAdjust="spacingAndGlyphs">0,3</text><rect x="1032" y="342.04" width="5.8" height="1.4" fill="#e2e2e2"/><text x="1011" y="349.54" font-size="15.2" fill="#d6d6d6" textLength="20.3" lengthAdjust="spacingAndGlyphs">0,4</text><rect x="1354.88" y="590.8" width="1.2" height="5.7" fill="#e2e2e2"/><text x="1345.33" y="612.7" font-size="15.2" fill="#d6d6d6" textLength="20.3" lengthAdjust="spacingAndGlyphs">0,4</text><rect x="1032" y="280.05" width="5.8" height="1.4" fill="#e2e2e2"/><text x="1011" y="287.55" font-size="15.2" fill="#d6d6d6" textLength="20.3" lengthAdjust="spacingAndGlyphs">0,5</text><rect x="1434.3" y="590.8" width="1.2" height="5.7" fill="#e2e2e2"/><text x="1424.75" y="612.7" font-size="15.2" fill="#d6d6d6" textLength="20.3" lengthAdjust="spacingAndGlyphs">0,5</text><rect x="1032" y="218.06" width="5.8" height="1.4" fill="#e2e2e2"/><text x="1011" y="225.56" font-size="15.2" fill="#d6d6d6" textLength="20.3" lengthAdjust="spacingAndGlyphs">0,6</text><rect x="1513.72" y="590.8" width="1.2" height="5.7" fill="#e2e2e2"/><text x="1504.17" y="612.7" font-size="15.2" fill="#d6d6d6" textLength="20.3" lengthAdjust="spacingAndGlyphs">0,6</text><rect x="1032" y="156.07" width="5.8" height="1.4" fill="#e2e2e2"/><text x="1011" y="163.57" font-size="15.2" fill="#d6d6d6" textLength="20.3" lengthAdjust="spacingAndGlyphs">0,7</text><rect x="1593.14" y="590.8" width="1.2" height="5.7" fill="#e2e2e2"/><text x="1583.59" y="612.7" font-size="15.2" fill="#d6d6d6" textLength="20.3" lengthAdjust="spacingAndGlyphs">0,7</text><rect x="1032" y="94.08" width="5.8" height="1.4" fill="#e2e2e2"/><text x="1011" y="101.58" font-size="15.2" fill="#d6d6d6" textLength="20.3" lengthAdjust="spacingAndGlyphs">0,8</text><rect x="1672.56" y="590.8" width="1.2" height="5.7" fill="#e2e2e2"/><text x="1663.01" y="612.7" font-size="15.2" fill="#d6d6d6" textLength="20.3" lengthAdjust="spacingAndGlyphs">0,8</text><text x="1319.5" y="64.8" font-size="15.2" fill="#d6d6d6" textLength="77.7" lengthAdjust="spacingAndGlyphs">CIE 1931 xy</text><rect x="1020" y="635.8" width="509.4" height="32" fill="url(#th)"/><rect x="1003" y="635.8" width="17" height="32" fill="#000"/><text x="1167.6" y="659.2" font-size="17.1" fill="#f4f4f4" textLength="35.8" lengthAdjust="spacingAndGlyphs">20%</text><text x="1241.1" y="659.2" font-size="17.1" fill="#f4f4f4" textLength="35.8" lengthAdjust="spacingAndGlyphs">40%</text><text x="1314.6" y="659.2" font-size="17.1" fill="#f4f4f4" textLength="35.8" lengthAdjust="spacingAndGlyphs">60%</text><text x="1388.2" y="659.2" font-size="17.1" fill="#f4f4f4" textLength="35.8" lengthAdjust="spacingAndGlyphs">80%</text><text x="1461.8" y="659.2" font-size="17.1" fill="#f4f4f4" textLength="45.8" lengthAdjust="spacingAndGlyphs">100%</text><rect x="1020" y="667.8" width="509.4" height="29.35" fill="#424242"/><rect x="1003" y="667.8" width="17" height="29.35" fill="url(#rh)"/><text x="1026" y="689.7" font-size="17.1" fill="#f4f4f4" textLength="70.3" lengthAdjust="spacingAndGlyphs">x: CIE31</text><text x="1167.6" y="689.7" font-size="17.1" fill="#f4f4f4" textLength="37.7" lengthAdjust="spacingAndGlyphs">0,34</text><text x="1241.1" y="689.7" font-size="17.1" fill="#f4f4f4" textLength="37.7" lengthAdjust="spacingAndGlyphs">0,36</text><text x="1314.6" y="689.7" font-size="17.1" fill="#f4f4f4" textLength="37.7" lengthAdjust="spacingAndGlyphs">0,38</text><text x="1388.2" y="689.7" font-size="17.1" fill="#f4f4f4" textLength="37.7" lengthAdjust="spacingAndGlyphs">0,41</text><text x="1461.8" y="689.7" font-size="17.1" fill="#f4f4f4" textLength="37.7" lengthAdjust="spacingAndGlyphs">0,43</text><rect x="1020" y="697.15" width="509.4" height="29.35" fill="#838383"/><rect x="1003" y="697.15" width="17" height="29.35" fill="url(#rh)"/><text x="1026" y="719.05" font-size="17.1" fill="#f4f4f4" textLength="70.3" lengthAdjust="spacingAndGlyphs">y: CIE31</text><text x="1167.6" y="719.05" font-size="17.1" fill="#f4f4f4" textLength="37.7" lengthAdjust="spacingAndGlyphs">0,37</text><text x="1241.1" y="719.05" font-size="17.1" fill="#f4f4f4" textLength="37.7" lengthAdjust="spacingAndGlyphs">0,40</text><text x="1314.6" y="719.05" font-size="17.1" fill="#f4f4f4" textLength="37.7" lengthAdjust="spacingAndGlyphs">0,44</text><text x="1388.2" y="719.05" font-size="17.1" fill="#f4f4f4" textLength="37.7" lengthAdjust="spacingAndGlyphs">0,47</text><text x="1461.8" y="719.05" font-size="17.1" fill="#f4f4f4" textLength="37.7" lengthAdjust="spacingAndGlyphs">0,51</text><rect x="1020" y="726.5" width="509.4" height="29.35" fill="#424242"/><rect x="1003" y="726.5" width="17" height="29.35" fill="url(#rh)"/><text x="1026" y="748.4" font-size="17.1" fill="#f4f4f4" textLength="10.5" lengthAdjust="spacingAndGlyphs">Y</text><text x="1168.6" y="748.4" font-size="17.1" fill="#f4f4f4" textLength="59" lengthAdjust="spacingAndGlyphs">187,86</text><text x="1242.1" y="748.4" font-size="17.1" fill="#f4f4f4" textLength="59" lengthAdjust="spacingAndGlyphs">185,35</text><text x="1315.6" y="748.4" font-size="17.1" fill="#f4f4f4" textLength="59" lengthAdjust="spacingAndGlyphs">183,17</text><text x="1389.2" y="748.4" font-size="17.1" fill="#f4f4f4" textLength="59" lengthAdjust="spacingAndGlyphs">181,28</text><text x="1462.8" y="748.4" font-size="17.1" fill="#f4f4f4" textLength="59" lengthAdjust="spacingAndGlyphs">179,51</text><rect x="1020" y="755.85" width="509.4" height="29.35" fill="#838383"/><rect x="1003" y="755.85" width="17" height="29.35" fill="url(#rh)"/><text x="1026" y="777.75" font-size="17.1" fill="#f4f4f4" textLength="126.7" lengthAdjust="spacingAndGlyphs">Target x:CIE31</text><text x="1167.6" y="777.75" font-size="17.1" fill="#f4f4f4" textLength="37.7" lengthAdjust="spacingAndGlyphs">0,34</text><text x="1241.1" y="777.75" font-size="17.1" fill="#f4f4f4" textLength="37.7" lengthAdjust="spacingAndGlyphs">0,36</text><text x="1314.6" y="777.75" font-size="17.1" fill="#f4f4f4" textLength="37.7" lengthAdjust="spacingAndGlyphs">0,39</text><text x="1388.2" y="777.75" font-size="17.1" fill="#f4f4f4" textLength="37.7" lengthAdjust="spacingAndGlyphs">0,41</text><text x="1461.8" y="777.75" font-size="17.1" fill="#f4f4f4" textLength="37.7" lengthAdjust="spacingAndGlyphs">0,44</text><rect x="1020" y="785.2" width="509.4" height="29.35" fill="#424242"/><rect x="1003" y="785.2" width="17" height="29.35" fill="url(#rh)"/><text x="1026" y="807.1" font-size="17.1" fill="#f4f4f4" textLength="127.5" lengthAdjust="spacingAndGlyphs">Target y:CIE31</text><text x="1167.6" y="807.1" font-size="17.1" fill="#f4f4f4" textLength="37.7" lengthAdjust="spacingAndGlyphs">0,37</text><text x="1241.1" y="807.1" font-size="17.1" fill="#f4f4f4" textLength="37.7" lengthAdjust="spacingAndGlyphs">0,41</text><text x="1314.6" y="807.1" font-size="17.1" fill="#f4f4f4" textLength="37.7" lengthAdjust="spacingAndGlyphs">0,45</text><text x="1388.2" y="807.1" font-size="17.1" fill="#f4f4f4" textLength="37.7" lengthAdjust="spacingAndGlyphs">0,49</text><text x="1461.8" y="807.1" font-size="17.1" fill="#f4f4f4" textLength="37.7" lengthAdjust="spacingAndGlyphs">0,54</text><rect x="1020" y="814.55" width="509.4" height="29.35" fill="#838383"/><rect x="1003" y="814.55" width="17" height="29.35" fill="url(#rh)"/><text x="1026" y="836.45" font-size="17.1" fill="#f4f4f4" textLength="73.5" lengthAdjust="spacingAndGlyphs">Target Y</text><text x="1168.6" y="836.45" font-size="17.1" fill="#f4f4f4" textLength="59" lengthAdjust="spacingAndGlyphs">182,95</text><text x="1242.1" y="836.45" font-size="17.1" fill="#f4f4f4" textLength="59" lengthAdjust="spacingAndGlyphs">179,69</text><text x="1315.6" y="836.45" font-size="17.1" fill="#f4f4f4" textLength="59" lengthAdjust="spacingAndGlyphs">176,97</text><text x="1389.2" y="836.45" font-size="17.1" fill="#f4f4f4" textLength="59" lengthAdjust="spacingAndGlyphs">174,73</text><text x="1462.8" y="836.45" font-size="17.1" fill="#f4f4f4" textLength="59" lengthAdjust="spacingAndGlyphs">172,78</text></svg><div class="cg" style="left:1038px;top:70px;width:668px;height:521px;clip-path:polygon(138.1px 518.7px,137.9px 518.8px,137.8px 518.8px,137.6px 518.8px,137.4px 518.9px,137.3px 518.9px,137.3px 518.9px,137.3px 518.9px,137.2px 518.9px,137.1px 518.9px,137.0px 518.9px,137.0px 518.9px,136.9px 518.9px,136.8px 518.9px,136.7px 518.9px,136.6px 518.9px,136.5px 518.9px,136.4px 518.8px,136.2px 518.8px,136.1px 518.8px,135.9px 518.7px,135.7px 518.6px,135.5px 518.5px,135.3px 518.4px,135.1px 518.3px,134.8px 518.1px,134.5px 517.9px,134.3px 517.8px,133.9px 517.6px,133.6px 517.3px,133.2px 517.1px,132.8px 516.8px,132.4px 516.5px,131.9px 516.2px,131.4px 515.8px,130.9px 515.5px,130.4px 515.1px,129.8px 514.7px,129.2px 514.2px,128.5px 513.8px,127.7px 513.3px,126.9px 512.7px,126.1px 512.1px,125.1px 511.5px,124.2px 510.8px,123.1px 510.1px,122.1px 509.4px,120.9px 508.6px,119.7px 507.7px,118.4px 506.8px,117.1px 505.8px,115.7px 504.6px,114.2px 503.4px,112.6px 502.0px,111.0px 500.6px,109.3px 499.0px,107.4px 497.0px,105.4px 494.7px,103.2px 492.2px,100.9px 489.3px,98.4px 485.9px,95.7px 482.1px,92.9px 477.9px,90.0px 473.2px,86.8px 467.8px,83.5px 461.8px,80.0px 455.1px,76.3px 447.6px,72.3px 439.3px,68.1px 430.0px,63.6px 420.0px,59.0px 409.0px,54.4px 396.9px,49.7px 383.8px,45.1px 369.5px,40.4px 354.3px,35.9px 338.3px,31.3px 321.1px,26.8px 302.8px,22.4px 284.0px,18.5px 265.0px,14.9px 245.7px,11.5px 225.8px,8.6px 206.0px,6.3px 186.8px,4.6px 167.9px,3.3px 149.4px,2.7px 131.4px,2.9px 114.3px,3.8px 98.1px,5.4px 82.5px,7.8px 68.0px,10.8px 54.9px,14.8px 43.3px,19.5px 32.8px,24.9px 23.8px,30.7px 16.5px,37.1px 10.9px,44.0px 7.0px,51.3px 4.4px,58.8px 2.9px,66.5px 2.6px,74.4px 3.6px,82.5px 5.5px,90.5px 7.6px,98.5px 10.2px,106.7px 13.3px,114.7px 16.7px,122.7px 20.3px,130.4px 23.8px,138.0px 27.6px,145.5px 31.4px,153.0px 35.4px,160.4px 39.5px,167.7px 43.7px,174.9px 48.0px,182.1px 52.4px,189.4px 56.9px,196.6px 61.5px,203.7px 66.3px,210.9px 71.1px,218.0px 75.9px,225.1px 80.9px,232.2px 85.9px,239.3px 91.0px,246.4px 96.1px,253.5px 101.3px,260.6px 106.5px,267.7px 111.8px,274.8px 117.1px,281.9px 122.4px,289.0px 127.8px,296.1px 133.2px,303.2px 138.6px,310.3px 144.0px,317.3px 149.5px,324.4px 154.9px,331.4px 160.3px,338.5px 165.8px,345.5px 171.2px,352.5px 176.6px,359.5px 182.0px,366.4px 187.4px,373.2px 192.8px,380.1px 198.1px,386.8px 203.4px,393.6px 208.6px,400.2px 213.8px,406.8px 219.0px,413.4px 224.1px,419.8px 229.2px,426.2px 234.1px,432.5px 239.0px,438.7px 243.9px,444.8px 248.6px,450.8px 253.3px,456.6px 257.8px,462.3px 262.3px,467.9px 266.7px,473.4px 271.0px,478.6px 275.1px,483.7px 279.0px,488.5px 282.8px,493.2px 286.5px,497.8px 290.0px,502.2px 293.5px,506.5px 296.8px,510.6px 300.1px,514.6px 303.1px,518.4px 306.1px,521.9px 308.8px,525.3px 311.5px,528.6px 314.0px,531.7px 316.4px,534.6px 318.7px,537.3px 320.8px,539.9px 322.9px,542.4px 324.8px,544.7px 326.6px,546.9px 328.3px,549.0px 330.0px,551.0px 331.5px,552.8px 332.9px,554.6px 334.3px,556.2px 335.6px,557.8px 336.8px,559.3px 338.0px,560.7px 339.1px,562.0px 340.1px,563.3px 341.1px,564.6px 342.1px,565.7px 343.0px,566.9px 343.9px,567.9px 344.8px,568.9px 345.6px,569.9px 346.3px,570.8px 347.0px,571.7px 347.7px,572.5px 348.3px,573.3px 348.9px,574.0px 349.5px,574.7px 350.0px,575.3px 350.5px,575.9px 350.9px,576.4px 351.3px,576.9px 351.7px,577.4px 352.1px,577.8px 352.4px,578.2px 352.8px,578.6px 353.1px,579.0px 353.3px,579.3px 353.6px,579.6px 353.8px,579.8px 354.0px,580.0px 354.2px,580.2px 354.3px,580.4px 354.5px,580.6px 354.6px,580.8px 354.8px,581.0px 354.9px,581.2px 355.1px,581.3px 355.2px,581.4px 355.3px,581.6px 355.4px,581.7px 355.5px,581.9px 355.6px,582.0px 355.7px,582.1px 355.8px,582.3px 355.9px,582.4px 356.0px,582.5px 356.1px,582.6px 356.2px,582.7px 356.3px,582.8px 356.4px,582.9px 356.4px,583.0px 356.5px,583.1px 356.6px,583.1px 356.6px,583.2px 356.6px,583.2px 356.7px,583.2px 356.7px,583.2px 356.7px,583.3px 356.7px,583.3px 356.7px,583.3px 356.7px)"><div style="top:2px;height:2px;background:linear-gradient(90deg,#0f0 54px,#0f0 74px)"></div><div style="top:4px;height:2px;background:linear-gradient(90deg,#0f0 45px,#0f0 85px)"></div><div style="top:6px;height:2px;background:linear-gradient(90deg,#0f0 39px,#0f0 93px)"></div><div style="top:8px;height:2px;background:linear-gradient(90deg,#0f0 36px,#0f0 99px)"></div><div style="top:10px;height:2px;background:linear-gradient(90deg,#0f0 32px,#0f0 105px)"></div><div style="top:12px;height:2px;background:linear-gradient(90deg,#0f0 30px,#0f0 110px)"></div><div style="top:14px;height:2px;background:linear-gradient(90deg,#0f0 28px,#0f0 115px)"></div><div style="top:16px;height:2px;background:linear-gradient(90deg,#0f0 26px,#0f0 120px)"></div><div style="top:18px;height:2px;background:linear-gradient(90deg,#00ff01 24px,#0f0 124px)"></div><div style="top:20px;height:2px;background:linear-gradient(90deg,#00ff02 23px,#0f0 129px)"></div><div style="top:22px;height:2px;background:linear-gradient(90deg,#00ff03 21px,#0f0 133px)"></div><div style="top:24px;height:2px;background:linear-gradient(90deg,#00ff04 20px,#0f0 96px,#0f0 137px)"></div><div style="top:26px;height:2px;background:linear-gradient(90deg,#00ff05 18px,#0f0 75px,#0f0 141px)"></div><div style="top:28px;height:2px;background:linear-gradient(90deg,#00ff06 17px,#0f0 72px,#0f0 145px)"></div><div style="top:30px;height:2px;background:linear-gradient(90deg,#00ff07 16px,#0f0 72px,#0f0 149px)"></div><div style="top:32px;height:2px;background:linear-gradient(90deg,#00ff08 15px,#0f0 73px,#0f0 153px)"></div><div style="top:34px;height:2px;background:linear-gradient(90deg,#00ff09 14px,#0f0 75px,#0f0 157px)"></div><div style="top:36px;height:2px;background:linear-gradient(90deg,#00ff0a 13px,#0f0 77px,#0f0 160px)"></div><div style="top:38px;height:2px;background:linear-gradient(90deg,#00ff0b 12px,#0f0 79px,#0f0 164px)"></div><div style="top:40px;height:2px;background:linear-gradient(90deg,#00ff0c 11px,#0f0 82px,#0f0 168px)"></div><div style="top:42px;height:2px;background:linear-gradient(90deg,#00ff0d 10px,#0f0 85px,#0f0 171px)"></div><div style="top:44px;height:2px;background:linear-gradient(90deg,#00ff0e 10px,#0f0 88px,#0f0 174px)"></div><div style="top:46px;height:2px;background:linear-gradient(90deg,#00ff0f 9px,#0f0 90px,#0f0 178px)"></div><div style="top:48px;height:2px;background:linear-gradient(90deg,#00ff10 8px,#0f0 93px,#0f0 181px)"></div><div style="top:50px;height:2px;background:linear-gradient(90deg,#00ff10 8px,#0f0 96px,#0f0 184px)"></div><div style="top:52px;height:2px;background:linear-gradient(90deg,#0f1 7px,#0f0 99px,#0f0 188px)"></div><div style="top:54px;height:2px;background:linear-gradient(90deg,#00ff12 6px,#0f0 102px,#0f0 191px)"></div><div style="top:56px;height:2px;background:linear-gradient(90deg,#00ff13 6px,#0f0 105px,#0f0 194px)"></div><div style="top:58px;height:2px;background:linear-gradient(90deg,#00ff14 5px,#0f0 108px,#0f0 197px)"></div><div style="top:60px;height:2px;background:linear-gradient(90deg,#00ff15 5px,#0f0 111px,#0f0 200px)"></div><div style="top:62px;height:2px;background:linear-gradient(90deg,#00ff16 4px,#0f0 114px,#0f0 203px)"></div><div style="top:64px;height:2px;background:linear-gradient(90deg,#00ff17 4px,#0f0 117px,#0f0 206px)"></div><div style="top:66px;height:2px;background:linear-gradient(90deg,#00ff18 3px,#0f0 120px,#0f0 209px)"></div><div style="top:68px;height:2px;background:linear-gradient(90deg,#00ff19 3px,#0f0 124px,#0f0 212px)"></div><div style="top:70px;height:2px;background:linear-gradient(90deg,#00ff1a 3px,#0f0 127px,#0f0 215px)"></div><div style="top:72px;height:2px;background:linear-gradient(90deg,#00ff1b 2px,#0f0 130px,#0f0 218px)"></div><div style="top:74px;height:2px;background:linear-gradient(90deg,#00ff1c 2px,#0f0 133px,#0f0 221px)"></div><div style="top:76px;height:2px;background:linear-gradient(90deg,#00ff1d 2px,#0f0 136px,#0f0 224px)"></div><div style="top:78px;height:2px;background:linear-gradient(90deg,#00ff1e 1px,#0f0 139px,#0f0 227px)"></div><div style="top:80px;height:2px;background:linear-gradient(90deg,#00ff1f 1px,#0f0 142px,#0f0 230px)"></div><div style="top:82px;height:2px;background:linear-gradient(90deg,#00ff20 1px,#0f0 145px,#0f0 233px)"></div><div style="top:84px;height:2px;background:linear-gradient(90deg,#00ff20 1px,#0f0 148px,#0f0 235px)"></div><div style="top:86px;height:2px;background:linear-gradient(90deg,#0f2 0px,#0f0 152px,#0f0 238px)"></div><div style="top:88px;height:2px;background:linear-gradient(90deg,#00ff23 0px,#0f0 155px,#0f0 241px)"></div><div style="top:90px;height:2px;background:linear-gradient(90deg,#00ff23 0px,#0f0 158px,#0f0 244px)"></div><div style="top:92px;height:2px;background:linear-gradient(90deg,#00ff24 0px,#0f0 161px,#0f0 247px)"></div><div style="top:94px;height:2px;background:linear-gradient(90deg,#00ff25 0px,#0f0 164px,#0f0 249px)"></div><div style="top:96px;height:2px;background:linear-gradient(90deg,#00ff26 0px,#0f0 167px,#0f0 252px)"></div><div style="top:98px;height:2px;background:linear-gradient(90deg,#00ff27 0px,#0f0 171px,#0f0 255px)"></div><div style="top:100px;height:2px;background:linear-gradient(90deg,#00ff28 0px,#0f0 173px,#02ff00 257px,#04ff00 258px)"></div><div style="top:102px;height:2px;background:linear-gradient(90deg,#00ff29 0px,#0f0 177px,#02ff00 256px,#07ff00 260px)"></div><div style="top:104px;height:2px;background:linear-gradient(90deg,#00ff2a 0px,#0f0 180px,#03ff00 256px,#0cff00 263px)"></div><div style="top:106px;height:2px;background:linear-gradient(90deg,#00ff2b 0px,#0f0 183px,#03ff00 255px,#1f0 266px)"></div><div style="top:108px;height:2px;background:linear-gradient(90deg,#00ff2c 0px,#0f0 186px,#02ff00 254px,#15ff00 268px)"></div><div style="top:110px;height:2px;background:linear-gradient(90deg,#00ff2d 0px,#0f0 189px,#02ff00 253px,#1aff00 271px)"></div><div style="top:112px;height:2px;background:linear-gradient(90deg,#00ff2e 0px,#0f0 192px,#03ff00 253px,#1fff00 274px)"></div><div style="top:114px;height:2px;background:linear-gradient(90deg,#00ff30 0px,#0f0 196px,#03ff00 252px,#24ff00 277px)"></div><div style="top:116px;height:2px;background:linear-gradient(90deg,#00ff31 0px,#0f0 199px,#02ff00 251px,#28ff00 279px)"></div><div style="top:118px;height:2px;background:linear-gradient(90deg,#00ff32 0px,#0f0 202px,#03ff00 251px,#2eff00 282px)"></div><div style="top:120px;height:2px;background:linear-gradient(90deg,#0f3 0px,#0f0 205px,#03ff00 250px,#34ff00 285px)"></div><div style="top:122px;height:2px;background:linear-gradient(90deg,#00ff34 0px,#0f0 208px,#02ff00 249px,#38ff00 287px)"></div><div style="top:124px;height:2px;background:linear-gradient(90deg,#00ff35 0px,#00ff01 196px,#02ff00 248px,#3eff00 290px)"></div><div style="top:126px;height:2px;background:linear-gradient(90deg,#00ff36 0px,#00ff02 196px,#03ff00 248px,#42ff00 292px)"></div><div style="top:128px;height:2px;background:linear-gradient(90deg,#00ff37 0px,#00ff04 195px,#03ff00 247px,#49ff00 295px)"></div><div style="top:130px;height:2px;background:linear-gradient(90deg,#00ff38 0px,#00ff05 195px,#0f0 233px,#04ff00 247px,#4fff00 298px)"></div><div style="top:132px;height:2px;background:linear-gradient(90deg,#00ff3a 0px,#00ff06 194px,#0f0 229px,#03ff00 246px,#54ff00 300px)"></div><div style="top:134px;height:2px;background:linear-gradient(90deg,#00ff3b 0px,#00ff08 194px,#0f0 230px,#03ff00 245px,#5aff00 303px)"></div><div style="top:136px;height:2px;background:linear-gradient(90deg,#00ff3c 0px,#00ff09 193px,#0f0 232px,#04ff00 245px,#61ff00 306px)"></div><div style="top:138px;height:2px;background:linear-gradient(90deg,#00ff3d 0px,#00ff0a 193px,#0f0 234px,#03ff00 244px,#6f0 308px)"></div><div style="top:140px;height:2px;background:linear-gradient(90deg,#00ff3e 0px,#00ff0c 192px,#0f0 237px,#07ff00 246px,#6eff00 311px)"></div><div style="top:142px;height:2px;background:linear-gradient(90deg,#00ff3f 0px,#00ff0d 192px,#0f0 240px,#6aff00 308px,#73ff00 313px)"></div><div style="top:144px;height:2px;background:linear-gradient(90deg,#00ff41 0px,#00ff0e 191px,#02ff00 241px,#70ff00 310px,#7aff00 316px)"></div><div style="top:146px;height:2px;background:linear-gradient(90deg,#00ff42 0px,#00ff10 191px,#02ff00 240px,#6eff00 308px,#82ff00 319px)"></div><div style="top:148px;height:2px;background:linear-gradient(90deg,#00ff43 0px,#0f1 190px,#03ff00 240px,#70ff00 308px,#8f0 321px)"></div><div style="top:150px;height:2px;background:linear-gradient(90deg,#0f4 0px,#00ff13 190px,#03ff01 239px,#6fff00 306px,#90ff00 324px)"></div><div style="top:152px;height:2px;background:linear-gradient(90deg,#00ff46 0px,#00ff14 190px,#02ff03 238px,#6fff00 305px,#96ff00 326px)"></div><div style="top:154px;height:2px;background:linear-gradient(90deg,#00ff47 0px,#00ff16 189px,#03ff04 238px,#47ff00 281px,#9fff00 329px)"></div><div style="top:156px;height:2px;background:linear-gradient(90deg,#00ff48 0px,#00ff17 189px,#03ff06 237px,#3f0 268px,#a1ff00 329px,#a7ff00 332px)"></div><div style="top:158px;height:2px;background:linear-gradient(90deg,#00ff4a 0px,#00ff19 188px,#02ff07 236px,#34ff00 268px,#a4ff00 329px,#aeff00 334px)"></div><div style="top:160px;height:2px;background:linear-gradient(90deg,#00ff4b 0px,#00ff1a 188px,#02ff09 235px,#38ff00 269px,#a7ff00 329px,#b7ff00 337px)"></div><div style="top:162px;height:2px;background:linear-gradient(90deg,#00ff4c 0px,#00ff1c 187px,#03ff0a 235px,#3cff00 271px,#abff00 330px,#beff00 339px)"></div><div style="top:164px;height:2px;background:linear-gradient(90deg,#00ff4e 0px,#00ff1d 187px,#03ff0c 234px,#43ff00 274px,#b2ff00 332px,#c8ff00 342px)"></div><div style="top:166px;height:2px;background:linear-gradient(90deg,#00ff4f 0px,#00ff1e 187px,#02ff0e 233px,#4aff00 277px,#baff00 334px,#d2ff00 345px)"></div><div style="top:168px;height:2px;background:linear-gradient(90deg,#00ff50 0px,#00ff20 186px,#02ff10 232px,#51ff00 280px,#c3ff00 337px,#daff00 347px)"></div><div style="top:170px;height:2px;background:linear-gradient(90deg,#00ff52 0px,#0f2 186px,#03ff11 232px,#57ff00 282px,#c8ff00 338px,#e4ff00 350px)"></div><div style="top:172px;height:2px;background:linear-gradient(90deg,#00ff53 1px,#00ff23 186px,#02ff13 231px,#5eff00 285px,#d0ff00 340px,#edff00 352px)"></div><div style="top:174px;height:2px;background:linear-gradient(90deg,#0f5 1px,#00ff25 186px,#02ff15 230px,#6f0 288px,#d8ff00 342px,#f8ff00 355px)"></div><div style="top:176px;height:2px;background:linear-gradient(90deg,#00ff56 1px,#00ff27 185px,#03ff17 230px,#70ff00 292px,#e3ff00 345px,#fffe00 357px,#fffb00 358px)"></div><div style="top:178px;height:2px;background:linear-gradient(90deg,#00ff57 1px,#00ff28 185px,#03ff18 229px,#70ff00 291px,#e2ff00 343px,#fffc00 356px,#fff300 360px)"></div><div style="top:180px;height:2px;background:linear-gradient(90deg,#00ff59 1px,#00ff2a 185px,#02ff1a 228px,#6eff01 289px,#e0ff00 341px,#fffd00 354px,#ffe800 363px)"></div><div style="top:182px;height:2px;background:linear-gradient(90deg,#00ff5a 1px,#00ff2c 184px,#02ff1c 227px,#6fff03 288px,#e1ff00 340px,#fffc00 353px,#ffe000 365px)"></div><div style="top:184px;height:2px;background:linear-gradient(90deg,#00ff5c 2px,#00ff2d 185px,#03ff1e 227px,#6fff05 287px,#acff00 316px,#fffd00 351px,#ffd700 368px)"></div><div style="top:186px;height:2px;background:linear-gradient(90deg,#00ff5d 2px,#00ff2f 184px,#03ff20 226px,#6fff07 286px,#a4ff00 311px,#fffe00 349px,#ffd000 370px)"></div><div style="top:188px;height:2px;background:linear-gradient(90deg,#00ff5f 2px,#00ff31 184px,#02ff22 225px,#6fff09 285px,#a9ff00 312px,#fffd00 348px,#ffc700 373px)"></div><div style="top:190px;height:2px;background:linear-gradient(90deg,#00ff60 2px,#00ff32 184px,#02ff24 224px,#6eff0b 283px,#b1ff00 314px,#fffe00 346px,#ffc400 373px,#ffc000 375px)"></div><div style="top:192px;height:2px;background:linear-gradient(90deg,#00ff62 3px,#00ff34 184px,#03ff26 224px,#70ff0d 283px,#bf0 317px,#fffc00 345px,#ffc200 372px,#ffb800 378px)"></div><div style="top:194px;height:2px;background:linear-gradient(90deg,#00ff63 3px,#00ff36 184px,#02ff28 223px,#6eff10 281px,#c6ff00 320px,#fffe00 343px,#ffc300 370px,#ffb100 381px)"></div><div style="top:196px;height:2px;background:linear-gradient(90deg,#00ff65 3px,#00ff37 184px,#02ff2a 222px,#6eff12 280px,#d0ff00 323px,#fffc00 342px,#ffc200 369px,#ffab00 383px)"></div><div style="top:198px;height:2px;background:linear-gradient(90deg,#00ff67 3px,#00ff3a 183px,#03ff2c 222px,#6fff14 279px,#dcff00 326px,#fffd00 340px,#ffc400 366px,#ffa400 386px)"></div><div style="top:200px;height:2px;background:linear-gradient(90deg,#00ff68 4px,#00ff3b 184px,#03ff2e 221px,#6fff17 278px,#e2ff00 327px,#fffc00 339px,#ffc300 365px,#ff9f00 388px)"></div><div style="top:202px;height:2px;background:linear-gradient(90deg,#00ff6a 4px,#00ff3d 183px,#02ff30 220px,#6fff19 277px,#e1ff00 325px,#fffd00 337px,#ffc300 363px,#ff9800 391px)"></div><div style="top:204px;height:2px;background:linear-gradient(90deg,#00ff6c 4px,#00ff3f 183px,#02ff33 219px,#6dff1c 275px,#dfff03 323px,#fffc00 336px,#ffc200 362px,#ff9300 393px)"></div><div style="top:206px;height:2px;background:linear-gradient(90deg,#00ff6d 4px,#00ff41 183px,#03ff35 219px,#70ff1e 275px,#e3ff05 323px,#fffd00 334px,#ffc200 360px,#ff8d00 396px)"></div><div style="top:208px;height:2px;background:linear-gradient(90deg,#00ff6f 5px,#00ff43 183px,#02ff37 218px,#6eff20 273px,#dfff09 320px,#fffe02 332px,#ffc400 357px,#ff9000 392px,#ff8700 399px)"></div><div style="top:210px;height:2px;background:linear-gradient(90deg,#00ff71 5px,#00ff45 183px,#02ff39 217px,#6eff23 272px,#e0ff0b 319px,#fffc04 331px,#ffc500 355px,#ff9000 390px,#ff8300 401px)"></div><div style="top:212px;height:2px;background:linear-gradient(90deg,#00ff72 5px,#00ff47 183px,#01ff3c 216px,#6eff25 271px,#e2ff0e 318px,#fffe08 329px,#ffcb00 350px,#ff9600 383px,#ff7e00 404px)"></div><div style="top:214px;height:2px;background:linear-gradient(90deg,#00ff74 5px,#00ff49 183px,#03ff3e 216px,#6fff28 270px,#e0ff11 316px,#fffc0a 328px,#ffc400 352px,#ff9000 386px,#ff7900 406px)"></div><div style="top:216px;height:2px;background:linear-gradient(90deg,#00ff76 6px,#00ff4b 183px,#02ff40 215px,#6fff2b 269px,#e1ff14 315px,#fffd0d 326px,#ffc300 351px,#ff8e00 385px,#ff7400 409px)"></div><div style="top:218px;height:2px;background:linear-gradient(90deg,#00ff78 6px,#00ff4d 183px,#02ff43 214px,#6dff2e 267px,#e0ff17 313px,#fffc10 325px,#ffc101 350px,#ff8d00 384px,#ff7000 411px)"></div><div style="top:220px;height:2px;background:linear-gradient(90deg,#00ff7a 6px,#00ff4f 183px,#03ff45 214px,#70ff30 267px,#e1ff1a 312px,#fffd14 323px,#ffc404 347px,#ff8e00 381px,#ff6c00 414px)"></div><div style="top:222px;height:2px;background:linear-gradient(90deg,#00ff7b 7px,#00ff51 184px,#03ff48 213px,#70ff33 266px,#e3ff1d 311px,#fffb16 322px,#ffc206 346px,#ff9c00 369px,#ff6c00 412px,#ff6800 416px)"></div><div style="top:224px;height:2px;background:linear-gradient(90deg,#00ff7d 7px,#00ff53 184px,#02ff4a 212px,#6eff36 264px,#e1ff20 309px,#fffd1a 320px,#ffc309 344px,#f90 369px,#ff6900 413px,#ff6400 419px)"></div><div style="top:226px;height:2px;background:linear-gradient(90deg,#00ff7f 7px,#00ff56 184px,#01ff4d 211px,#6eff39 263px,#e0ff23 307px,#fffe1d 318px,#ffc30c 342px,#ff9200 372px,#ff6300 418px,#ff5f00 422px)"></div><div style="top:228px;height:2px;background:linear-gradient(90deg,#00ff81 8px,#00ff58 184px,#03ff4f 211px,#6eff3b 262px,#e1ff26 306px,#fffc20 317px,#ffc20e 341px,#ff8d00 374px,#ff5e00 421px,#ff5c00 424px)"></div><div style="top:230px;height:2px;background:linear-gradient(90deg,#00ff83 8px,#00ff5a 184px,#02ff52 210px,#6fff3e 261px,#dfff2a 304px,#fffe24 315px,#ffc411 338px,#ff9000 370px,#ff6000 416px,#ff5800 427px)"></div><div style="top:232px;height:2px;background:linear-gradient(90deg,#00ff85 8px,#00ff5d 184px,#02ff55 209px,#6fff41 260px,#e1ff2d 303px,#fffc27 314px,#ffc314 337px,#ff8e02 369px,#ff5f00 415px,#f50 429px)"></div><div style="top:234px;height:2px;background:linear-gradient(90deg,#00ff87 9px,#00ff5f 185px,#03ff57 209px,#6fff44 259px,#e2ff30 302px,#fffd2b 312px,#ffc317 335px,#ff8e04 367px,#ff6900 401px,#ff5100 432px)"></div><div style="top:236px;height:2px;background:linear-gradient(90deg,#00ff89 9px,#00ff61 185px,#03ff5a 208px,#70ff47 258px,#e1ff34 300px,#fffc2d 311px,#ffc219 334px,#ff8d06 366px,#ff6e00 394px,#ff4e00 434px)"></div><div style="top:238px;height:2px;background:linear-gradient(90deg,#00ff8c 9px,#00ff64 185px,#02ff5d 207px,#6dff4b 256px,#dfff38 298px,#fffd31 309px,#ffc21c 332px,#ff8e09 363px,#ff6c00 394px,#ff4b00 437px)"></div><div style="top:240px;height:2px;background:linear-gradient(90deg,#00ff8e 10px,#0f6 186px,#02ff60 206px,#6eff4e 255px,#e0ff3b 297px,#fffb34 308px,#ffc11e 331px,#ff8d0b 362px,#ff6800 396px,#ff4800 439px)"></div><div style="top:242px;height:2px;background:linear-gradient(90deg,#00ff90 10px,#00ff69 186px,#03ff63 206px,#6eff51 254px,#dfff3f 295px,#fffd39 306px,#ffc322 328px,#ff8e0e 359px,#ff6400 398px,#ff4500 442px)"></div><div style="top:244px;height:2px;background:linear-gradient(90deg,#00ff92 10px,#00ff6b 186px,#02ff66 205px,#6eff54 253px,#e0ff42 294px,#fffe3d 304px,#ffc426 326px,#ff9011 356px,#ff6100 399px,#ff4100 445px)"></div><div style="top:246px;height:2px;background:linear-gradient(90deg,#00ff94 11px,#00ff6e 187px,#02ff69 204px,#6fff58 252px,#e2ff46 293px,#fffc40 303px,#ffc228 325px,#ff8e13 355px,#ff6000 398px,#ff3f00 447px)"></div><div style="top:248px;height:2px;background:linear-gradient(90deg,#00ff96 11px,#00ff70 188px,#03ff6b 204px,#6fff5b 251px,#e0ff4a 291px,#fffe44 301px,#ffc32b 323px,#ff8e15 353px,#ff5f01 396px,#ff3c00 450px)"></div><div style="top:250px;height:2px;background:linear-gradient(90deg,#0f9 11px,#00ff73 188px,#03ff6f 203px,#6fff5e 250px,#e1ff4d 290px,#fffc48 300px,#ffc12e 322px,#ff8d17 352px,#ff5e03 395px,#ff3900 452px)"></div><div style="top:252px;height:2px;background:linear-gradient(90deg,#00ff9b 12px,#00ff76 189px,#02ff72 202px,#70ff62 249px,#e3ff51 289px,#fffd4c 298px,#ffc432 319px,#ff901b 348px,#ff6106 390px,#ff4800 423px,#ff3600 455px)"></div><div style="top:254px;height:2px;background:linear-gradient(90deg,#00ff9d 12px,#00ff79 189px,#02ff75 201px,#6dff66 247px,#deff56 286px,#ffff51 296px,#ffc536 317px,#ff901e 346px,#ff6108 387px,#ff4700 422px,#ff3400 457px)"></div><div style="top:256px;height:2px;background:linear-gradient(90deg,#00ffa0 12px,#00ff7b 190px,#03ff78 201px,#70ff69 247px,#e3ff59 286px,#fffd54 295px,#ffc339 316px,#ff8e20 345px,#ff5f09 387px,#ff4300 425px,#ff3100 460px)"></div><div style="top:258px;height:2px;background:linear-gradient(90deg,#00ffa2 13px,#00ff7e 191px,#03ff7c 200px,#6eff6d 245px,#e1ff5d 284px,#ffff59 293px,#ffc43c 314px,#ff8e23 343px,#ff600c 384px,#ff4100 426px,#ff2e00 463px)"></div><div style="top:260px;height:2px;background:linear-gradient(90deg,#00ffa5 13px,#00ff81 192px,#02ff7f 199px,#6eff71 244px,#dfff62 282px,#fffd5c 292px,#ffc23f 313px,#ff8d25 342px,#ff5e0d 383px,#ff3e00 429px,#ff2c00 465px)"></div><div style="top:262px;height:2px;background:linear-gradient(90deg,#00ffa7 14px,#00ff84 193px,#03ff82 199px,#6fff75 243px,#e1ff66 281px,#fffe62 290px,#ffc544 310px,#ff9029 338px,#ff6111 378px,#ff3b00 431px,#ff2a00 468px)"></div><div style="top:264px;height:2px;background:linear-gradient(90deg,#0fa 14px,#00ff87 194px,#07ff85 200px,#75ff78 244px,#e6ff6a 281px,#fffc65 289px,#ffc347 309px,#ff8e2b 337px,#ff6012 377px,#ff3800 434px,#ff2800 470px)"></div><div style="top:266px;height:2px;background:linear-gradient(90deg,#00ffac 14px,#00ff8a 195px,#4fff80 229px,#c0ff73 268px,#fffe6a 287px,#ffc44b 307px,#ff8e2e 335px,#ff5f15 375px,#ff3600 435px,#ff2500 473px)"></div><div style="top:268px;height:2px;background:linear-gradient(90deg,#00ffaf 15px,#02ff8d 196px,#6dff81 239px,#dfff73 276px,#fffc6e 286px,#ffc24e 306px,#ff8d30 334px,#ff5e16 374px,#ff3500 434px,#ff2300 475px)"></div><div style="top:270px;height:2px;background:linear-gradient(90deg,#00ffb2 15px,#01ff91 195px,#6dff85 238px,#e1ff78 275px,#fffe73 284px,#ffc352 304px,#ff8e34 331px,#ff5f19 370px,#ff3602 429px,#ff2100 478px)"></div><div style="top:272px;height:2px;background:linear-gradient(90deg,#00ffb4 16px,#03ff95 195px,#6eff89 237px,#dfff7d 273px,#ffff79 282px,#ffc356 302px,#ff8e37 329px,#ff5f1c 368px,#ff3604 426px,#ff1f00 480px)"></div><div style="top:274px;height:2px;background:linear-gradient(90deg,#00ffb7 16px,#02ff99 194px,#6eff8d 236px,#e0ff81 272px,#fffd7d 281px,#ffc45b 300px,#ff903b 326px,#ff611f 364px,#ff3706 421px,#ff2500 461px,#ff1d00 483px)"></div><div style="top:276px;height:2px;background:linear-gradient(90deg,#00ffba 16px,#01ff9d 193px,#6eff92 235px,#deff86 270px,#ffff83 279px,#ffc55f 298px,#ff903f 324px,#ff6122 361px,#ff3808 417px,#ff2400 460px,#ff1b00 486px)"></div><div style="top:278px;height:2px;background:linear-gradient(90deg,#00ffbd 17px,#03ffa1 193px,#6fff96 234px,#e0ff8b 269px,#fffd87 278px,#ffc362 297px,#ff8e41 323px,#ff6024 360px,#ff370a 416px,#f20 462px,#ff1900 488px)"></div><div style="top:280px;height:2px;background:linear-gradient(90deg,#00ffc0 17px,#02ffa5 192px,#6fff9b 233px,#e2ff90 268px,#fffe8d 276px,#ffc367 295px,#ff8f44 321px,#ff6026 358px,#ff360b 414px,#ff2000 464px,#ff1700 491px)"></div><div style="top:282px;height:2px;background:linear-gradient(90deg,#00ffc2 18px,#02ffa9 191px,#6cffa0 231px,#dcff96 265px,#fffc91 275px,#ffc16a 294px,#ff8d47 320px,#ff5e28 357px,#ff350d 413px,#ff1d00 467px,#ff1500 493px)"></div><div style="top:284px;height:2px;background:linear-gradient(90deg,#00ffc6 18px,#01ffad 190px,#6dffa4 230px,#deff9b 264px,#fffe97 273px,#ffc570 291px,#ff904d 316px,#ff612d 352px,#ff3810 406px,#ff1b00 469px,#ff1300 496px)"></div><div style="top:286px;height:2px;background:linear-gradient(90deg,#00ffc9 19px,#03ffb1 190px,#70ffa9 230px,#e3ffa0 264px,#fffc9b 272px,#ffc374 290px,#ff8f4f 315px,#ff602e 351px,#ff3612 405px,#ff1900 472px,#f10 498px)"></div><div style="top:288px;height:2px;background:linear-gradient(90deg,#0fc 19px,#02ffb6 189px,#6effae 228px,#deffa6 261px,#fffea2 270px,#ffc379 288px,#ff8f53 313px,#ff5f31 349px,#ff3613 403px,#ff1700 474px,#ff0f00 501px)"></div><div style="top:290px;height:2px;background:linear-gradient(90deg,#00ffcf 20px,#01ffbb 188px,#6effb3 227px,#dfffab 260px,#ffffa9 268px,#ffc47e 286px,#ff9058 310px,#ff6135 345px,#ff3817 397px,#ff1600 475px,#ff0e00 504px)"></div><div style="top:292px;height:2px;background:linear-gradient(90deg,#00ffd2 20px,#01ffbf 187px,#6bffb8 225px,#ddffb1 258px,#fffdad 267px,#ffc281 285px,#ff8f5a 309px,#ff5f37 344px,#ff3718 396px,#ff1400 477px,#ff0c00 506px)"></div><div style="top:294px;height:2px;background:linear-gradient(90deg,#00ffd5 20px,#03ffc4 187px,#6fffbd 225px,#dfffb7 257px,#ffffb5 265px,#ffc689 282px,#ff9060 306px,#ff613b 340px,#ff381c 391px,#ff1400 473px,#ff0a00 509px)"></div><div style="top:296px;height:2px;background:linear-gradient(90deg,#00ffd9 21px,#02ffc9 186px,#6fffc3 224px,#e1ffbc 256px,#fffdb9 264px,#ffc48c 281px,#ff8f62 305px,#ff603d 339px,#ff371d 390px,#ff1301 472px,#ff0900 511px)"></div><div style="top:298px;height:2px;background:linear-gradient(90deg,#00ffdc 21px,#01ffce 185px,#6cffc8 222px,#dfffc3 254px,#ffffc1 262px,#ffc492 279px,#ff9068 302px,#ff6242 335px,#ff3821 385px,#ff1404 465px,#ff0700 514px)"></div><div style="top:300px;height:2px;background:linear-gradient(90deg,#00ffe0 22px,#03ffd3 185px,#70ffce 222px,#e1ffc9 253px,#fffcc5 261px,#ffc295 278px,#ff8f6a 301px,#ff6044 334px,#ff3722 384px,#ff1405 464px,#ff0600 516px)"></div><div style="top:302px;height:2px;background:linear-gradient(90deg,#00ffe3 22px,#02ffd8 184px,#6dffd4 220px,#deffcf 251px,#fffecd 259px,#ffc39b 276px,#ff8f6f 299px,#ff6047 332px,#ff3624 382px,#ff1306 462px,#ff0600 511px,#ff0400 519px)"></div><div style="top:304px;height:2px;background:linear-gradient(90deg,#00ffe7 23px,#01ffdd 183px,#6dffd9 219px,#e0ffd6 250px,#fffcd2 258px,#ffc19f 275px,#ff8d72 298px,#ff5e49 331px,#ff3526 381px,#ff1207 461px,#ff0500 511px,#ff0300 521px)"></div><div style="top:306px;height:2px;background:linear-gradient(90deg,#00ffeb 23px,#01ffe2 182px,#6effdf 218px,#deffdc 248px,#fffeda 256px,#ffc5a7 272px,#ff9079 294px,#ff614f 326px,#ff382a 374px,#ff140b 451px,#ff0400 509px,#ff0100 524px)"></div><div style="top:308px;height:2px;background:linear-gradient(90deg,#0fe 24px,#03ffe8 182px,#6effe6 217px,#e0ffe3 247px,#feffe2 254px,#ffc2ab 271px,#ff8f7c 293px,#ff6051 325px,#ff362c 373px,#ff130c 450px,#ff0300 512px,#f00 527px)"></div><div style="top:310px;height:2px;background:linear-gradient(90deg,#00fff2 24px,#02ffee 181px,#6fffec 216px,#e2ffea 246px,#fffde8 253px,#ffc3b2 269px,#ff8f81 291px,#ff6056 322px,#ff372f 369px,#ff140e 444px,#ff0100 514px,#f00 529px)"></div><div style="top:312px;height:2px;background:linear-gradient(90deg,#00fff6 25px,#01fff3 180px,#6cfff2 214px,#dcfff1 243px,#fffff1 251px,#ffc4b8 267px,#ff8f86 289px,#ff6059 320px,#ff3732 367px,#ff1310 442px,#f00 517px,#f00 532px)"></div><div style="top:314px;height:2px;background:linear-gradient(90deg,#00fffa 25px,#00fff9 179px,#6cfff9 213px,#defff8 242px,#fffdf6 250px,#ffc2bc 266px,#ff8d89 288px,#ff5e5b 319px,#ff3533 366px,#ff1211 441px,#f00 520px,#f00 534px)"></div><div style="top:316px;height:2px;background:linear-gradient(90deg,#00fffe 26px,#02ffff 179px,#70feff 213px,#e3feff 242px,#fefeff 248px,#ffc2c3 264px,#ff8f90 285px,#ff6061 315px,#ff3738 360px,#ff1415 432px,#f00 518px,#f00 537px)"></div><div style="top:318px;height:2px;background:linear-gradient(90deg,#00fbff 26px,#01f9ff 178px,#6df8ff 212px,#dff7ff 241px,#fff3fc 249px,#ffbac1 265px,#ff878d 287px,#ff5a5f 318px,#ff3236 365px,#ff1013 441px,#f00 515px,#f00 539px)"></div><div style="top:320px;height:2px;background:linear-gradient(90deg,#00f7ff 27px,#01f3ff 177px,#6ef1ff 212px,#deefff 241px,#ffecfc 249px,#ffb5c2 265px,#ff838e 287px,#ff5760 318px,#ff3037 365px,#ff0f13 441px,#ff0001 511px,#f00 542px)"></div><div style="top:322px;height:2px;background:linear-gradient(90deg,#00f3ff 27px,#03edff 177px,#6febff 212px,#e3e8ff 242px,#ffe6fd 249px,#ffb0c3 265px,#ff7f8f 287px,#ff5360 319px,#ff2d36 367px,#ff0c13 444px,#ff0003 507px,#f00 545px)"></div><div style="top:324px;height:2px;background:linear-gradient(90deg,#00efff 28px,#02e7ff 176px,#6de5ff 211px,#dee1ff 241px,#ffdffd 249px,#ffabc4 265px,#ff7c90 287px,#ff5161 319px,#ff2b37 367px,#ff0b14 444px,#ff0004 503px,#f00 547px)"></div><div style="top:326px;height:2px;background:linear-gradient(90deg,#00ebff 28px,#01e2ff 175px,#6edeff 211px,#dedbff 241px,#ffd9fe 249px,#ffa6c5 265px,#ff7891 287px,#ff4e62 319px,#ff2938 367px,#ff0a15 444px,#ff0006 499px,#f00 550px)"></div><div style="top:328px;height:2px;background:linear-gradient(90deg,#00e7ff 29px,#03ddff 175px,#6fd8ff 211px,#e2d4ff 242px,#ffd2fe 249px,#ffa1c6 265px,#ff7592 287px,#ff4c63 319px,#ff2839 367px,#ff0915 444px,#ff0007 496px,#f00 552px)"></div><div style="top:330px;height:2px;background:linear-gradient(90deg,#00e3ff 29px,#02d7ff 174px,#70d2ff 211px,#e2cdff 242px,#fcf 249px,#ff9ac4 266px,#ff6e8f 289px,#ff4660 322px,#ff2337 372px,#ff0514 452px,#ff0006 502px,#f00 555px)"></div><div style="top:332px;height:2px;background:linear-gradient(90deg,#00e0ff 30px,#01d2ff 173px,#6ecdff 210px,#e2c7ff 242px,#fec6ff 249px,#ff93c2 267px,#ff678d 291px,#ff415e 325px,#ff1f35 376px,#ff0312 458px,#f00 549px,#f00 557px)"></div><div style="top:334px;height:2px;background:linear-gradient(90deg,#00dcff 30px,#01cdff 172px,#6cc7ff 209px,#dec1ff 241px,#ffbdfc 250px,#ff8fc3 267px,#ff648e 291px,#ff3f5f 325px,#ff1e36 376px,#ff0113 458px,#f00 552px,#f00 560px)"></div><div style="top:336px;height:2px;background:linear-gradient(90deg,#00d8ff 31px,#02c8ff 172px,#70c2ff 210px,#e1bbff 242px,#ffb7fc 250px,#ff8ac4 267px,#ff618f 291px,#ff3c60 325px,#ff1c37 376px,#ff0014 458px,#f00 555px,#f00 563px)"></div><div style="top:338px;height:2px;background:linear-gradient(90deg,#00d4ff 32px,#02c3ff 171px,#6ebcff 209px,#e1b5ff 242px,#ffb1fd 250px,#ff86c4 267px,#ff5e90 291px,#ff3a61 325px,#ff1a38 376px,#ff0015 458px,#f00 558px,#f00 565px)"></div><div style="top:340px;height:2px;background:linear-gradient(90deg,#00d1ff 32px,#01bfff 170px,#6eb7ff 209px,#e1afff 242px,#ffacfd 250px,#ff80c3 268px,#ff598f 292px,#ff3660 327px,#ff1737 380px,#ff0015 458px,#f00 560px,#f00 568px)"></div><div style="top:342px;height:2px;background:linear-gradient(90deg,#00cdff 33px,#03baff 170px,#6fb2ff 209px,#e1a9ff 242px,#ffa6fe 250px,#ff7cc3 268px,#ff558e 293px,#ff3360 328px,#ff1537 381px,#ff0017 455px,#f00 562px,#f00 570px)"></div><div style="top:344px;height:2px;background:linear-gradient(90deg,#00c9ff 33px,#02b6ff 169px,#6dadff 208px,#e1a4ff 242px,#ffa1fe 250px,#ff77c4 268px,#ff528f 293px,#ff3060 329px,#ff1337 383px,#ff0019 451px,#f00 563px,#f00 573px)"></div><div style="top:346px;height:2px;background:linear-gradient(90deg,#00c6ff 34px,#01b1ff 168px,#6ea8ff 208px,#e19eff 242px,#ff9cff 250px,#ff73c5 268px,#ff4f90 293px,#ff2e61 329px,#ff1137 383px,#ff001b 447px,#f00 564px,#f00 575px)"></div><div style="top:348px;height:2px;background:linear-gradient(90deg,#00c2ff 34px,#03adff 168px,#6fa3ff 208px,#e099ff 242px,#ff96ff 250px,#ff6ec3 269px,#ff4b8f 294px,#ff2b61 330px,#ff0f38 384px,#ff001d 443px,#f00 564px,#f00 578px)"></div><div style="top:350px;height:2px;background:linear-gradient(90deg,#00bfff 35px,#02a8ff 167px,#709eff 208px,#e493ff 243px,#ff8ffc 251px,#ff68c1 270px,#ff468d 296px,#ff275f 333px,#ff0c36 389px,#ff001f 440px,#f00 565px,#f00 580px)"></div><div style="top:352px;height:2px;background:linear-gradient(90deg,#0bf 36px,#01a4ff 166px,#6e9aff 207px,#e08fff 242px,#ff8afc 251px,#ff64c2 270px,#ff438e 296px,#ff2560 333px,#ff0a37 389px,#ff0021 436px,#ff0001 560px,#f00 583px)"></div><div style="top:354px;height:2px;background:linear-gradient(90deg,#00b8ff 36px,#01a0ff 165px,#6c95ff 206px,#dc8aff 241px,#ff85fd 251px,#ff61c3 270px,#ff408f 296px,#ff2360 333px,#ff0937 389px,#ff0023 432px,#ff0003 552px,#f00 586px)"></div><div style="top:356px;height:2px;background:linear-gradient(90deg,#00b4ff 37px,#029cff 165px,#7091ff 207px,#e384ff 243px,#ff80fd 251px,#ff5dc4 270px,#ff3d90 296px,#ff2060 334px,#ff0737 391px,#ff0025 431px,#ff0004 550px,#f00 587px)"></div><div style="top:358px;height:2px;background:linear-gradient(90deg,#00b1ff 37px,#0298ff 164px,#6e8cff 206px,#e080ff 242px,#ff7cfe 251px,#ff59c5 270px,#ff3a91 296px,#ff1e61 334px,#ff0538 391px,#ff0025 432px,#ff0004 552px,#f00 582px)"></div><div style="top:360px;height:2px;background:linear-gradient(90deg,#00aeff 38px,#0194ff 163px,#6f88ff 206px,#e07bff 242px,#ff77fe 251px,#ff56c5 270px,#ff3790 297px,#ff1b61 335px,#ff0438 392px,#ff0018 471px,#ff0001 576px)"></div><div style="top:362px;height:2px;background:linear-gradient(90deg,#0af 39px,#0390ff 163px,#6f84ff 206px,#e376ff 243px,#ff72ff 251px,#ff51c4 271px,#ff338f 298px,#ff1860 337px,#ff0137 395px,#ff0014 489px,#ff0002 571px)"></div><div style="top:364px;height:2px;background:linear-gradient(90deg,#00a7ff 39px,#028dff 162px,#6d80ff 205px,#df72ff 242px,#ff6eff 251px,#ff4dc4 271px,#ff3190 298px,#ff1761 337px,#ff0037 396px,#ff0014 490px,#ff0004 565px)"></div><div style="top:366px;height:2px;background:linear-gradient(90deg,#00a4ff 40px,#0189ff 161px,#6e7cff 205px,#df6dff 242px,#ff68fc 252px,#ff49c3 272px,#ff2c8e 300px,#ff135f 340px,#ff0037 398px,#ff0014 493px,#ff0005 560px)"></div><div style="top:368px;height:2px;background:linear-gradient(90deg,#00a1ff 40px,#0385ff 161px,#6f77ff 205px,#e268ff 243px,#ff63fc 252px,#ff45c3 272px,#ff2a8f 300px,#ff1160 340px,#ff003a 394px,#ff0016 487px,#ff0007 554px)"></div><div style="top:370px;height:2px;background:linear-gradient(90deg,#009dff 41px,#0282ff 160px,#7073ff 205px,#e264ff 243px,#ff5ffd 252px,#ff42c4 272px,#ff2790 300px,#ff0f61 340px,#ff003d 390px,#ff0019 480px,#ff0008 549px)"></div><div style="top:372px;height:2px;background:linear-gradient(90deg,#009aff 42px,#027fff 159px,#6e70ff 204px,#df60ff 242px,#ff5bfd 252px,#ff3ec2 273px,#ff238d 302px,#ff0c5f 343px,#ff0040 386px,#ff001c 473px,#ff000a 543px)"></div><div style="top:374px;height:2px;background:linear-gradient(90deg,#0097ff 42px,#017bff 158px,#6f6cff 204px,#e25cff 243px,#ff57fe 252px,#ff3bc3 273px,#ff218e 302px,#ff0a60 343px,#ff0043 382px,#ff001e 467px,#ff000c 538px)"></div><div style="top:376px;height:2px;background:linear-gradient(90deg,#0094ff 43px,#0278ff 158px,#7068ff 204px,#e258ff 243px,#ff53fe 252px,#ff38c4 273px,#ff1f8f 302px,#ff0961 343px,#ff0046 379px,#ff0020 462px,#ff000e 532px)"></div><div style="top:378px;height:2px;background:linear-gradient(90deg,#0091ff 44px,#0275ff 157px,#6e65ff 203px,#e254ff 243px,#ff4dfb 253px,#ff33c2 274px,#ff1c8e 303px,#ff0660 345px,#ff0047 378px,#f02 460px,#ff000f 527px)"></div><div style="top:380px;height:2px;background:linear-gradient(90deg,#008eff 44px,#0171ff 156px,#6f61ff 203px,#e250ff 243px,#ff4afc 253px,#ff2fc1 275px,#ff188c 305px,#ff035e 348px,#ff0035 413px,#ff0012 518px,#f01 521px)"></div><div style="top:382px;height:2px;background:linear-gradient(90deg,#008bff 45px,#036eff 156px,#6f5dff 203px,#e14cff 243px,#ff46fc 253px,#ff2cc2 275px,#ff168d 305px,#ff025f 348px,#ff0036 413px,#ff0013 516px)"></div><div style="top:384px;height:2px;background:linear-gradient(90deg,#08f 46px,#026bff 155px,#6e5aff 202px,#e148ff 243px,#ff42fd 253px,#ff2ac2 275px,#ff148e 305px,#ff005f 348px,#ff0036 413px,#ff0015 510px)"></div><div style="top:386px;height:2px;background:linear-gradient(90deg,#0085ff 46px,#0168ff 154px,#6e57ff 202px,#e144ff 243px,#ff3efd 253px,#ff27c3 275px,#ff118f 305px,#ff0060 348px,#ff0037 413px,#ff0017 505px)"></div><div style="top:388px;height:2px;background:linear-gradient(90deg,#0082ff 47px,#0365ff 154px,#6f53ff 202px,#e140ff 243px,#ff3bfd 253px,#ff24c4 275px,#ff0f90 305px,#ff0063 346px,#ff0039 410px,#ff0019 499px)"></div><div style="top:390px;height:2px;background:linear-gradient(90deg,#007fff 48px,#0262ff 153px,#7050ff 202px,#e13dff 243px,#ff37fe 253px,#ff21c4 275px,#ff0d8f 306px,#ff0067 342px,#ff003d 404px,#ff001b 494px)"></div><div style="top:392px;height:2px;background:linear-gradient(90deg,#007cff 48px,#025fff 152px,#6e4dff 201px,#e139ff 243px,#ff34fe 253px,#ff1ec5 275px,#ff0a90 306px,#ff006b 338px,#ff0041 398px,#ff001d 488px)"></div><div style="top:394px;height:2px;background:linear-gradient(90deg,#0079ff 49px,#015cff 151px,#6f49ff 201px,#e136ff 243px,#ff2ffb 254px,#ff1ac1 277px,#ff078d 309px,#ff006d 337px,#ff0043 396px,#ff001f 483px)"></div><div style="top:396px;height:2px;background:linear-gradient(90deg,#0076ff 50px,#0359ff 151px,#7046ff 201px,#e432ff 244px,#ff2cfc 254px,#ff17c2 277px,#ff058d 309px,#ff006d 338px,#ff0042 398px,#f02 477px)"></div><div style="top:398px;height:2px;background:linear-gradient(90deg,#0073ff 51px,#0257ff 150px,#6e43ff 200px,#e02fff 243px,#ff28fc 254px,#ff15c3 277px,#ff038e 309px,#ff005f 355px,#ff0036 424px,#ff0024 472px)"></div><div style="top:400px;height:2px;background:linear-gradient(90deg,#0071ff 51px,#0154ff 149px,#6f40ff 200px,#e02bff 243px,#ff25fd 254px,#ff12c3 277px,#ff018f 309px,#ff0060 355px,#ff0037 424px,#ff0026 466px)"></div><div style="top:402px;height:2px;background:linear-gradient(90deg,#006eff 52px,#0351ff 149px,#6f3dff 200px,#e328ff 244px,#ff22fd 254px,#ff0fc2 278px,#ff008d 311px,#ff005e 358px,#ff0035 429px,#ff0029 461px)"></div><div style="top:404px;height:2px;background:linear-gradient(90deg,#006bff 53px,#024eff 148px,#703aff 200px,#e324ff 244px,#ff1ffd 254px,#ff0cc2 278px,#ff0090 309px,#ff0061 355px,#ff0038 424px,#ff002c 455px)"></div><div style="top:406px;height:2px;background:linear-gradient(90deg,#0068ff 54px,#024cff 147px,#6e37ff 199px,#e022ff 243px,#ff1bfe 254px,#ff0ac3 278px,#ff0096 305px,#ff0067 349px,#ff003d 415px,#ff002e 450px)"></div><div style="top:408px;height:2px;background:linear-gradient(90deg,#06f 54px,#0349ff 147px,#6f34ff 199px,#e31eff 244px,#ff18fe 254px,#ff07c4 278px,#ff009b 302px,#ff006b 345px,#ff0040 409px,#ff0031 444px)"></div><div style="top:410px;height:2px;background:linear-gradient(90deg,#0063ff 55px,#0247ff 146px,#7031ff 199px,#e31bff 244px,#ff14fb 255px,#ff04c2 279px,#ff0095 307px,#ff0065 353px,#ff003b 421px,#ff0034 439px)"></div><div style="top:412px;height:2px;background:linear-gradient(90deg,#0060ff 56px,#0244ff 145px,#6e2fff 198px,#e018ff 243px,#ff11fc 255px,#ff01c1 280px,#ff008d 314px,#ff005e 363px,#ff0037 433px)"></div><div style="top:414px;height:2px;background:linear-gradient(90deg,#005dff 57px,#0142ff 144px,#6f2cff 198px,#e215ff 244px,#ff0efc 255px,#ff00c2 280px,#ff008d 314px,#ff005f 363px,#ff0039 428px)"></div><div style="top:416px;height:2px;background:linear-gradient(90deg,#005bff 58px,#033fff 144px,#7029ff 198px,#e212ff 244px,#ff0bfd 255px,#ff00c2 280px,#ff008e 314px,#ff005f 363px,#ff003d 422px)"></div><div style="top:418px;height:2px;background:linear-gradient(90deg,#0058ff 59px,#023dff 143px,#6e27ff 197px,#df0fff 243px,#ff08fd 255px,#ff00cb 276px,#ff0095 309px,#ff0065 356px,#ff0040 417px)"></div><div style="top:420px;height:2px;background:linear-gradient(90deg,#05f 60px,#013bff 142px,#6f24ff 197px,#e20cff 244px,#ff06fd 255px,#ff00cd 275px,#ff0097 308px,#ff0067 355px,#ff0043 411px)"></div><div style="top:422px;height:2px;background:linear-gradient(90deg,#0053ff 60px,#0338ff 142px,#6f21ff 197px,#e209ff 244px,#ff03fe 255px,#ff00c4 280px,#ff008f 315px,#ff0060 365px,#ff0047 406px)"></div><div style="top:424px;height:2px;background:linear-gradient(90deg,#0050ff 61px,#0236ff 141px,#701fff 197px,#e206ff 244px,#ff00fe 255px,#ff00c5 280px,#ff0090 315px,#ff0061 365px,#ff004a 400px)"></div><div style="top:426px;height:2px;background:linear-gradient(90deg,#004eff 62px,#0234ff 140px,#6e1cff 196px,#e204ff 244px,#ff00fc 256px,#ff00c1 282px,#ff008d 318px,#ff005e 370px,#ff004e 395px)"></div><div style="top:428px;height:2px;background:linear-gradient(90deg,#004bff 63px,#0331ff 140px,#6f1aff 196px,#e201ff 244px,#ff00fc 256px,#ff00c2 282px,#ff008d 318px,#ff005e 370px,#ff0052 389px)"></div><div style="top:430px;height:2px;background:linear-gradient(90deg,#0048ff 64px,#022fff 139px,#7017ff 196px,#e100ff 244px,#ff00fc 256px,#ff00c3 282px,#ff008e 318px,#ff005f 370px,#ff0056 384px)"></div><div style="top:432px;height:2px;background:linear-gradient(90deg,#0046ff 65px,#022dff 138px,#6e15ff 195px,#df00ff 243px,#ff00fd 256px,#ff00c3 282px,#ff008f 318px,#ff0060 370px,#ff005a 378px)"></div><div style="top:434px;height:2px;background:linear-gradient(90deg,#0043ff 66px,#032bff 138px,#7112ff 196px,#d200ff 238px,#ff00fd 256px,#ff00c2 283px,#ff008d 320px,#ff005e 373px)"></div><div style="top:436px;height:2px;background:linear-gradient(90deg,#0041ff 67px,#0329ff 137px,#7010ff 195px,#c800ff 234px,#ff00fd 256px,#ff00c2 283px,#ff008e 320px,#ff0063 367px)"></div><div style="top:438px;height:2px;background:linear-gradient(90deg,#003eff 68px,#0227ff 136px,#6e0eff 194px,#be00ff 230px,#ff00fe 256px,#ff00c3 283px,#ff008e 320px,#ff0067 362px)"></div><div style="top:440px;height:2px;background:linear-gradient(90deg,#003cff 69px,#0225ff 135px,#6f0cff 194px,#b500ff 226px,#ff00fe 256px,#ff00c4 283px,#ff008f 320px,#ff006d 356px)"></div><div style="top:442px;height:2px;background:linear-gradient(90deg,#0039ff 70px,#0323ff 135px,#6f09ff 194px,#ac00ff 222px,#ff00fe 256px,#ff00c4 283px,#ff0090 320px,#ff0071 351px)"></div><div style="top:444px;height:2px;background:linear-gradient(90deg,#0037ff 71px,#0221ff 134px,#7007ff 194px,#a500ff 219px,#ff00fc 257px,#ff00c1 285px,#ff008d 323px,#f07 345px)"></div><div style="top:446px;height:2px;background:linear-gradient(90deg,#0035ff 71px,#021fff 133px,#6f05ff 193px,#a400ff 218px,#ff00fc 257px,#ff00c2 285px,#ff008e 323px,#ff007c 340px)"></div><div style="top:448px;height:2px;background:linear-gradient(90deg,#0032ff 72px,#031dff 133px,#6f03ff 193px,#e300ff 245px,#ff00fd 257px,#ff00c2 285px,#ff008d 324px,#ff0083 334px)"></div><div style="top:450px;height:2px;background:linear-gradient(90deg,#0030ff 73px,#021bff 132px,#7001ff 193px,#e300ff 245px,#ff00fd 257px,#ff00c3 285px,#ff008e 324px,#f08 329px)"></div><div style="top:452px;height:2px;background:linear-gradient(90deg,#002eff 74px,#0219ff 131px,#6e00ff 192px,#e000ff 244px,#ff00fd 257px,#ff00c3 285px,#ff008f 323px)"></div><div style="top:454px;height:2px;background:linear-gradient(90deg,#002bff 75px,#0317ff 131px,#7100ff 193px,#e300ff 245px,#ff00fe 257px,#ff00c4 285px,#ff0096 318px)"></div><div style="top:456px;height:2px;background:linear-gradient(90deg,#0029ff 76px,#0315ff 130px,#6800ff 188px,#d900ff 241px,#ff00fe 257px,#ff00c4 285px,#ff009d 312px)"></div><div style="top:458px;height:2px;background:linear-gradient(90deg,#0026ff 78px,#0214ff 129px,#6100ff 184px,#d200ff 238px,#ff00fc 258px,#ff00c2 287px,#ff00a4 307px)"></div><div style="top:460px;height:2px;background:linear-gradient(90deg,#0024ff 79px,#0212ff 128px,#5800ff 179px,#c900ff 234px,#ff00fc 258px,#ff00c2 287px,#ff00ad 301px)"></div><div style="top:462px;height:2px;background:linear-gradient(90deg,#02f 80px,#0310ff 128px,#5100ff 175px,#c200ff 231px,#ff00fc 258px,#ff00c3 287px,#ff00b5 296px)"></div><div style="top:464px;height:2px;background:linear-gradient(90deg,#001fff 81px,#020eff 127px,#4b00ff 171px,#bc00ff 228px,#ff00fd 258px,#ff00c3 287px,#ff00be 290px)"></div><div style="top:466px;height:2px;background:linear-gradient(90deg,#001dff 82px,#020dff 126px,#4300ff 166px,#b300ff 224px,#ff00fd 258px,#ff00c7 285px)"></div><div style="top:468px;height:2px;background:linear-gradient(90deg,#001bff 83px,#030bff 126px,#3f00ff 163px,#af00ff 222px,#ff00fd 258px,#ff00d2 279px)"></div><div style="top:470px;height:2px;background:linear-gradient(90deg,#0018ff 84px,#0209ff 125px,#3700ff 158px,#a700ff 218px,#ff00fe 258px,#ff00db 274px)"></div><div style="top:472px;height:2px;background:linear-gradient(90deg,#0016ff 85px,#0208ff 124px,#30f 155px,#a300ff 216px,#ff00fe 258px,#ff00e8 268px)"></div><div style="top:474px;height:2px;background:linear-gradient(90deg,#0014ff 87px,#0306ff 124px,#3200ff 154px,#a100ff 215px,#ff00fe 258px,#ff00f3 263px)"></div><div style="top:476px;height:2px;background:linear-gradient(90deg,#01f 88px,#0304ff 123px,#3800ff 157px,#a800ff 218px,#fd00ff 257px)"></div><div style="top:478px;height:2px;background:linear-gradient(90deg,#000fff 89px,#0203ff 122px,#7000ff 189px,#e400ff 246px,#f100ff 252px)"></div><div style="top:480px;height:2px;background:linear-gradient(90deg,#000dff 90px,#0301ff 122px,#7100ff 189px,#e400ff 246px)"></div><div style="top:482px;height:2px;background:linear-gradient(90deg,#000bff 92px,#0300ff 121px,#6f00ff 188px,#d800ff 241px)"></div><div style="top:484px;height:2px;background:linear-gradient(90deg,#0008ff 93px,#0200ff 120px,#7000ff 188px,#c0f 235px)"></div><div style="top:486px;height:2px;background:linear-gradient(90deg,#0006ff 95px,#0300ff 120px,#7000ff 188px,#c100ff 230px)"></div><div style="top:488px;height:2px;background:linear-gradient(90deg,#0004ff 96px,#0300ff 119px,#7100ff 188px,#b500ff 224px)"></div><div style="top:490px;height:2px;background:linear-gradient(90deg,#0001ff 98px,#0200ff 118px,#7000ff 187px,#ab00ff 219px)"></div><div style="top:492px;height:2px;background:linear-gradient(90deg,#00f 99px,#0300ff 118px,#7000ff 187px,#a000ff 213px)"></div><div style="top:494px;height:2px;background:linear-gradient(90deg,#00f 101px,#0300ff 117px,#7100ff 187px,#9700ff 208px)"></div><div style="top:496px;height:2px;background:linear-gradient(90deg,#00f 103px,#0300ff 116px,#6f00ff 186px,#8c00ff 202px)"></div><div style="top:498px;height:2px;background:linear-gradient(90deg,#00f 105px,#0400ff 116px,#7000ff 186px,#8300ff 197px)"></div><div style="top:500px;height:2px;background:linear-gradient(90deg,#00f 107px,#0500ff 116px,#7200ff 187px,#7900ff 191px)"></div><div style="top:502px;height:2px;background:linear-gradient(90deg,#00f 109px,#0a00ff 119px,#7100ff 186px)"></div><div style="top:504px;height:2px;background:linear-gradient(90deg,#0100ff 112px,#6700ff 180px)"></div><div style="top:506px;height:2px;background:linear-gradient(90deg,#0500ff 114px,#6000ff 175px)"></div><div style="top:508px;height:2px;background:linear-gradient(90deg,#0a00ff 117px,#5700ff 169px)"></div><div style="top:510px;height:2px;background:linear-gradient(90deg,#0f00ff 120px,#4f00ff 164px)"></div><div style="top:512px;height:2px;background:linear-gradient(90deg,#1400ff 123px,#4700ff 158px)"></div><div style="top:514px;height:2px;background:linear-gradient(90deg,#1900ff 126px,#4000ff 153px)"></div><div style="top:516px;height:2px;background:linear-gradient(90deg,#1e00ff 129px,#3800ff 147px)"></div></div><div class="cg" style="left:1516px;top:71px;width:189px;height:188px;overflow:hidden"><div class="cg" style="left:0;top:0;width:189px;height:188px;clip-path:polygon(-678.5px 1649.2px,-678.6px 1649.3px,-678.9px 1649.4px,-679.2px 1649.4px,-679.6px 1649.5px,-679.9px 1649.6px,-680.3px 1649.7px,-680.6px 1649.8px,-680.8px 1649.8px,-681.0px 1649.9px,-681.1px 1649.9px,-681.2px 1649.9px,-681.3px 1649.9px,-681.4px 1649.8px,-681.5px 1649.8px,-681.6px 1649.8px,-681.7px 1649.8px,-681.8px 1649.8px,-681.9px 1649.8px,-682.1px 1649.8px,-682.2px 1649.8px,-682.4px 1649.8px,-682.5px 1649.8px,-682.7px 1649.8px,-682.9px 1649.8px,-683.0px 1649.8px,-683.2px 1649.8px,-683.4px 1649.9px,-683.5px 1649.9px,-683.7px 1649.9px,-683.9px 1649.9px,-684.1px 1649.9px,-684.3px 1649.8px,-684.5px 1649.8px,-684.8px 1649.7px,-685.0px 1649.6px,-685.2px 1649.5px,-685.5px 1649.4px,-685.8px 1649.3px,-686.1px 1649.1px,-686.4px 1648.9px,-686.7px 1648.8px,-687.1px 1648.5px,-687.5px 1648.3px,-687.9px 1648.1px,-688.3px 1647.8px,-688.7px 1647.5px,-689.1px 1647.2px,-689.6px 1646.9px,-690.1px 1646.6px,-690.5px 1646.2px,-691.0px 1645.8px,-691.5px 1645.5px,-692.0px 1645.1px,-692.5px 1644.6px,-693.1px 1644.2px,-693.7px 1643.7px,-694.3px 1643.1px,-695.0px 1642.6px,-695.7px 1642.0px,-696.4px 1641.4px,-697.2px 1640.8px,-697.9px 1640.1px,-698.7px 1639.4px,-699.6px 1638.7px,-700.4px 1637.9px,-701.2px 1637.2px,-702.1px 1636.4px,-703.0px 1635.5px,-703.9px 1634.7px,-704.8px 1633.8px,-705.8px 1632.9px,-706.9px 1632.0px,-708.0px 1631.0px,-709.0px 1630.0px,-710.2px 1629.0px,-711.3px 1628.0px,-712.6px 1626.9px,-713.8px 1625.8px,-715.2px 1624.7px,-716.5px 1623.5px,-718.0px 1622.2px,-719.5px 1620.9px,-721.1px 1619.5px,-722.7px 1618.1px,-724.4px 1616.7px,-726.1px 1615.2px,-727.9px 1613.6px,-729.7px 1612.0px,-731.6px 1610.4px,-733.5px 1608.7px,-735.5px 1607.0px,-737.5px 1605.3px,-739.5px 1603.4px,-741.7px 1601.5px,-743.9px 1599.5px,-746.1px 1597.4px,-748.5px 1595.2px,-750.9px 1592.9px,-753.3px 1590.5px,-755.9px 1588.1px,-758.5px 1585.5px,-761.1px 1582.8px,-763.8px 1579.9px,-766.7px 1576.9px,-769.5px 1573.7px,-772.4px 1570.6px,-775.3px 1567.3px,-778.3px 1563.9px,-781.4px 1560.3px,-784.6px 1556.3px,-788.0px 1551.9px,-791.6px 1547.0px,-795.3px 1541.7px,-799.1px 1536.2px,-803.1px 1530.4px,-807.2px 1524.2px,-811.4px 1517.6px,-815.8px 1510.5px,-820.3px 1502.8px,-825.0px 1494.5px,-829.8px 1485.8px,-834.7px 1476.7px,-839.7px 1467.2px,-844.9px 1457.2px,-850.3px 1446.5px,-855.8px 1435.0px,-861.5px 1422.8px,-867.4px 1409.6px,-873.5px 1395.6px,-879.8px 1380.9px,-886.2px 1365.6px,-892.8px 1349.5px,-899.5px 1332.4px,-906.5px 1314.4px,-913.7px 1295.3px,-921.1px 1275.1px,-928.7px 1253.8px,-936.7px 1231.6px,-944.9px 1208.5px,-953.3px 1184.3px,-961.7px 1159.0px,-970.3px 1132.6px,-978.8px 1104.9px,-987.3px 1075.8px,-995.7px 1045.5px,-1004.3px 1013.8px,-1012.9px 980.9px,-1021.5px 946.8px,-1030.2px 911.6px,-1038.7px 875.2px,-1047.2px 837.9px,-1055.5px 799.5px,-1063.9px 759.9px,-1072.3px 718.7px,-1080.8px 676.3px,-1089.1px 632.9px,-1097.3px 588.7px,-1105.1px 544.1px,-1112.6px 499.4px,-1119.7px 454.7px,-1126.5px 409.6px,-1133.0px 363.6px,-1139.4px 317.1px,-1145.4px 270.3px,-1150.9px 223.5px,-1156.1px 177.1px,-1160.6px 131.3px,-1164.5px 86.4px,-1167.9px 42.0px,-1170.9px -2.2px,-1173.5px -46.2px,-1175.5px -89.7px,-1176.9px -132.5px,-1177.7px -174.4px,-1177.8px -215.2px,-1177.1px -254.7px,-1175.8px -293.2px,-1173.8px -331.2px,-1171.2px -368.3px,-1167.9px -404.4px,-1163.9px -439.3px,-1159.2px -472.7px,-1153.9px -504.4px,-1147.8px -534.2px,-1141.0px -562.3px,-1133.3px -589.1px,-1124.9px -614.5px,-1115.9px -638.2px,-1106.2px -660.3px,-1096.1px -680.6px,-1085.5px -698.9px,-1074.6px -715.3px,-1063.2px -729.5px,-1051.1px -741.5px,-1038.5px -751.6px,-1025.5px -759.9px,-1012.1px -766.7px,-998.4px -772.0px,-984.7px -776.1px,-970.9px -779.1px,-956.9px -780.7px,-942.6px -780.5px,-928.1px -778.7px,-913.4px -775.7px,-898.5px -771.7px,-883.6px -767.1px,-868.8px -762.0px,-854.0px -756.9px,-839.2px -751.3px,-824.3px -744.9px,-809.3px -737.8px,-794.3px -730.2px,-779.4px -722.2px,-764.5px -714.0px,-749.8px -705.7px,-735.3px -697.4px,-721.0px -689.1px,-706.7px -680.6px,-692.6px -671.9px,-678.6px -663.1px,-664.7px -654.1px,-650.9px -644.9px,-637.1px -635.6px,-623.4px -626.2px,-609.7px -616.7px,-596.1px -607.0px,-582.7px -597.2px,-569.2px -587.3px,-555.9px -577.2px,-542.5px -567.0px,-529.2px -556.6px,-515.8px -546.2px,-502.5px -535.6px,-489.2px -524.9px,-475.9px -514.1px,-462.6px -503.1px,-449.4px -492.1px,-436.2px -480.9px,-423.0px -469.6px,-409.8px -458.3px,-396.6px -446.9px,-383.5px -435.4px,-370.3px -423.8px,-357.2px -412.1px,-344.1px -400.3px,-331.1px -388.4px,-318.0px -376.5px,-304.9px -364.6px,-291.8px -352.5px,-278.7px -340.4px,-265.6px -328.3px,-252.6px -316.1px,-239.5px -303.8px,-226.4px -291.5px,-213.4px -279.1px,-200.3px -266.7px,-187.2px -254.2px,-174.1px -241.7px,-160.9px -229.2px,-147.8px -216.6px,-134.7px -203.9px,-121.6px -191.3px,-108.5px -178.6px,-95.4px -165.9px,-82.3px -153.2px,-69.3px -140.4px,-56.2px -127.7px,-43.2px -114.9px,-30.1px -102.1px,-17.1px -89.2px,-4.1px -76.4px,8.9px -63.6px,21.9px -50.9px,34.9px -38.0px,47.9px -25.2px,60.9px -12.4px,73.9px 0.4px,86.9px 13.1px,99.8px 25.9px,112.6px 38.6px,125.5px 51.3px,138.3px 64.0px,151.0px 76.7px,163.8px 89.4px,176.5px 102.0px,189.1px 114.6px,201.8px 127.2px,214.3px 139.7px,226.8px 152.2px,239.3px 164.6px,251.7px 177.0px,264.1px 189.3px,276.5px 201.6px,288.7px 213.9px,300.9px 226.1px,313.1px 238.1px,325.1px 250.2px,337.1px 262.2px,349.1px 274.1px,361.0px 285.9px,372.8px 297.7px,384.5px 309.4px,396.2px 321.0px,407.7px 332.5px,419.1px 343.9px,430.5px 355.2px,441.9px 366.4px,453.1px 377.6px,464.2px 388.6px,475.2px 399.5px,486.0px 410.3px,496.8px 421.0px,507.4px 431.6px,517.9px 442.0px,528.2px 452.4px,538.5px 462.7px,548.6px 472.8px,558.6px 482.8px,568.3px 492.6px,577.9px 502.1px,587.3px 511.5px,596.5px 520.7px,605.6px 529.7px,614.4px 538.5px,623.1px 547.2px,631.7px 555.7px,640.2px 564.2px,648.5px 572.5px,656.8px 580.7px,664.9px 588.8px,672.9px 596.7px,680.8px 604.6px,688.5px 612.3px,696.1px 619.8px,703.5px 627.1px,710.7px 634.3px,717.7px 641.2px,724.5px 648.0px,731.2px 654.6px,737.7px 661.0px,744.1px 667.3px,750.3px 673.4px,756.3px 679.4px,762.2px 685.3px,768.0px 691.0px,773.6px 696.6px,779.0px 702.0px,784.3px 707.3px,789.5px 712.5px,794.5px 717.5px,799.4px 722.4px,804.1px 727.2px,808.7px 731.8px,813.2px 736.3px,817.6px 740.6px,821.8px 744.8px,825.9px 748.9px,829.8px 752.9px,833.7px 756.8px,837.5px 760.6px,841.2px 764.2px,844.8px 767.8px,848.2px 771.2px,851.6px 774.5px,854.9px 777.7px,858.0px 780.9px,861.2px 783.9px,864.2px 786.9px,867.1px 789.9px,870.0px 792.7px,872.7px 795.5px,875.4px 798.2px,878.0px 800.8px,880.6px 803.3px,883.1px 805.9px,885.6px 808.3px,888.0px 810.8px,890.4px 813.1px,892.7px 815.4px,894.9px 817.7px,897.1px 819.9px,899.3px 822.0px,901.4px 824.1px,903.4px 826.2px,905.5px 828.2px,907.4px 830.2px,909.3px 832.1px,911.2px 833.9px,913.0px 835.7px,914.7px 837.5px,916.4px 839.2px,918.1px 840.9px,919.7px 842.5px,921.3px 844.0px,922.8px 845.5px,924.3px 846.9px,925.8px 848.3px,927.2px 849.7px,928.5px 851.0px,929.8px 852.3px,931.1px 853.5px,932.3px 854.7px,933.4px 855.9px,934.5px 857.0px,935.6px 858.0px,936.6px 859.1px,937.6px 860.1px,938.6px 861.1px,939.6px 862.0px,940.5px 862.9px,941.4px 863.8px,942.2px 864.7px,943.0px 865.5px,943.8px 866.3px,944.6px 867.1px,945.3px 867.8px,946.1px 868.5px,946.8px 869.2px,947.4px 869.9px,948.1px 870.5px,948.7px 871.1px,949.2px 871.7px,949.8px 872.3px,950.3px 872.8px,950.8px 873.3px,951.3px 873.7px,951.7px 874.2px,952.1px 874.5px,952.5px 874.9px,952.8px 875.3px,953.2px 875.6px,953.6px 876.0px,953.9px 876.4px,954.3px 876.7px,954.6px 877.1px,954.9px 877.4px,955.3px 877.7px,955.6px 878.0px,955.9px 878.3px,956.2px 878.6px,956.5px 878.9px,956.7px 879.2px,957.0px 879.5px,957.3px 879.7px,957.5px 880.0px,957.7px 880.2px,958.0px 880.4px,958.2px 880.7px,958.5px 881.0px,958.8px 881.2px,959.0px 881.5px,959.3px 881.7px,959.5px 882.0px,959.8px 882.3px,960.0px 882.5px,960.3px 882.7px,960.5px 883.0px,960.8px 883.2px,961.0px 883.5px,961.2px 883.7px,961.4px 883.9px,961.7px 884.1px,961.9px 884.3px,962.0px 884.5px,962.2px 884.7px,962.4px 884.9px,962.6px 885.0px,962.7px 885.2px,962.8px 885.3px,963.0px 885.4px,963.1px 885.6px,963.2px 885.7px,963.3px 885.8px,963.4px 885.9px,963.5px 886.0px,963.6px 886.0px,963.6px 886.1px,963.7px 886.2px,963.8px 886.2px,963.8px 886.3px,963.9px 886.3px,963.9px 886.4px,964.0px 886.4px,964.0px 886.4px,964.0px 886.5px,964.1px 886.5px,964.1px 886.5px,964.1px 886.6px)"><div style="top:0px;height:3px;background:linear-gradient(90deg,#a3ff00 0px,#fffc00 154px,#ffe700 189px)"></div><div style="top:3px;height:3px;background:linear-gradient(90deg,#a4ff00 0px,#fffd00 152px,#ffe600 189px)"></div><div style="top:6px;height:3px;background:linear-gradient(90deg,#a4ff00 0px,#fffc00 151px,#ffe500 189px)"></div><div style="top:9px;height:3px;background:linear-gradient(90deg,#a5ff00 0px,#fffc00 149px,#ffe400 189px)"></div><div style="top:12px;height:3px;background:linear-gradient(90deg,#a6ff00 0px,#fffc00 147px,#ffe300 189px)"></div><div style="top:15px;height:3px;background:linear-gradient(90deg,#a7ff00 0px,#fffc00 145px,#ffe200 189px)"></div><div style="top:18px;height:3px;background:linear-gradient(90deg,#a8ff00 0px,#fffc00 143px,#ffe100 189px)"></div><div style="top:21px;height:3px;background:linear-gradient(90deg,#a9ff00 0px,#fffc00 142px,#ffdf00 189px)"></div><div style="top:24px;height:3px;background:linear-gradient(90deg,#af0 0px,#fffc00 140px,#ffde00 189px)"></div><div style="top:27px;height:3px;background:linear-gradient(90deg,#abff00 0px,#fffc00 138px,#fd0 189px)"></div><div style="top:30px;height:3px;background:linear-gradient(90deg,#acff00 0px,#fffc00 136px,#ffdc00 189px)"></div><div style="top:33px;height:3px;background:linear-gradient(90deg,#acff00 0px,#fffc00 134px,#ffdb00 189px)"></div><div style="top:36px;height:3px;background:linear-gradient(90deg,#adff00 0px,#fffc00 132px,#ffda00 189px)"></div><div style="top:39px;height:3px;background:linear-gradient(90deg,#aeff00 0px,#fffc00 131px,#ffd900 189px)"></div><div style="top:42px;height:3px;background:linear-gradient(90deg,#afff00 0px,#fffc00 129px,#ffd800 189px)"></div><div style="top:45px;height:3px;background:linear-gradient(90deg,#b0ff00 0px,#fffc00 127px,#ffd700 189px)"></div><div style="top:48px;height:3px;background:linear-gradient(90deg,#b1ff00 0px,#fffc00 125px,#ffd600 189px)"></div><div style="top:51px;height:3px;background:linear-gradient(90deg,#b2ff00 0px,#fffc00 123px,#ffd500 189px)"></div><div style="top:54px;height:3px;background:linear-gradient(90deg,#b3ff00 0px,#fffd00 121px,#ffd400 189px)"></div><div style="top:57px;height:3px;background:linear-gradient(90deg,#b4ff00 0px,#fffc00 120px,#ffd300 189px)"></div><div style="top:60px;height:3px;background:linear-gradient(90deg,#b5ff00 0px,#fffc00 118px,#ffd200 189px)"></div><div style="top:63px;height:3px;background:linear-gradient(90deg,#b6ff00 0px,#fffc00 116px,#ffd100 189px)"></div><div style="top:66px;height:3px;background:linear-gradient(90deg,#b7ff00 0px,#fffc00 114px,#ffd000 189px)"></div><div style="top:69px;height:3px;background:linear-gradient(90deg,#b8ff00 0px,#fffc00 112px,#ffcf00 189px)"></div><div style="top:72px;height:3px;background:linear-gradient(90deg,#b9ff00 0px,#fffc00 111px,#ffce00 189px)"></div><div style="top:75px;height:3px;background:linear-gradient(90deg,#baff00 0px,#fffc00 109px,#ffcd00 189px)"></div><div style="top:78px;height:3px;background:linear-gradient(90deg,#bf0 0px,#fffc00 107px,#fc0 189px)"></div><div style="top:81px;height:3px;background:linear-gradient(90deg,#bcff00 0px,#fffc00 105px,#ffcb00 189px)"></div><div style="top:84px;height:3px;background:linear-gradient(90deg,#bdff00 0px,#fffc00 103px,#ffca00 189px)"></div><div style="top:87px;height:3px;background:linear-gradient(90deg,#beff00 0px,#fffd00 101px,#ffc900 189px)"></div><div style="top:90px;height:3px;background:linear-gradient(90deg,#bfff00 0px,#fffc00 100px,#ffc800 189px)"></div><div style="top:93px;height:3px;background:linear-gradient(90deg,#c0ff00 0px,#fffc00 98px,#ffc700 189px)"></div><div style="top:96px;height:3px;background:linear-gradient(90deg,#c1ff00 0px,#fffc00 96px,#ffc600 189px)"></div><div style="top:99px;height:3px;background:linear-gradient(90deg,#c2ff00 0px,#fffc00 94px,#ffc500 189px)"></div><div style="top:102px;height:3px;background:linear-gradient(90deg,#c3ff00 0px,#fffc00 92px,#ffc400 189px)"></div><div style="top:105px;height:3px;background:linear-gradient(90deg,#c4ff00 0px,#fffc00 91px,#ffc300 189px)"></div><div style="top:108px;height:3px;background:linear-gradient(90deg,#c5ff00 0px,#fffc00 89px,#ffc200 189px)"></div><div style="top:111px;height:3px;background:linear-gradient(90deg,#c6ff00 0px,#fffc00 87px,#ffc100 189px)"></div><div style="top:114px;height:3px;background:linear-gradient(90deg,#c7ff00 0px,#fffc00 85px,#ffc100 187px,#ffc000 189px)"></div><div style="top:117px;height:3px;background:linear-gradient(90deg,#c8ff00 0px,#fffc00 83px,#ffc200 184px,#ffbf00 189px)"></div><div style="top:120px;height:3px;background:linear-gradient(90deg,#c9ff00 0px,#fffc00 81px,#ffc200 182px,#ffbe00 189px)"></div><div style="top:123px;height:3px;background:linear-gradient(90deg,#caff00 0px,#fffc00 80px,#ffc100 181px,#ffbd00 189px)"></div><div style="top:126px;height:3px;background:linear-gradient(90deg,#cf0 0px,#fffc00 78px,#ffc100 179px,#ffbc00 189px)"></div><div style="top:129px;height:3px;background:linear-gradient(90deg,#cdff00 0px,#fffc00 76px,#ffc100 177px,#fb0 189px)"></div><div style="top:132px;height:3px;background:linear-gradient(90deg,#ceff00 0px,#fffc00 74px,#ffc200 174px,#fb0 189px)"></div><div style="top:135px;height:3px;background:linear-gradient(90deg,#cfff00 0px,#fffc00 72px,#ffc200 172px,#ffba00 189px)"></div><div style="top:138px;height:3px;background:linear-gradient(90deg,#d0ff00 0px,#fffc00 71px,#ffc100 171px,#ffb900 189px)"></div><div style="top:141px;height:3px;background:linear-gradient(90deg,#d1ff00 0px,#fffc00 69px,#ffc100 169px,#ffb800 189px)"></div><div style="top:144px;height:3px;background:linear-gradient(90deg,#d2ff00 0px,#fffc00 67px,#ffc100 166px,#ffb700 189px)"></div><div style="top:147px;height:3px;background:linear-gradient(90deg,#d3ff00 0px,#fffc00 65px,#ffc100 164px,#ffb600 189px)"></div><div style="top:150px;height:3px;background:linear-gradient(90deg,#d5ff00 0px,#fffc00 63px,#ffc100 162px,#ffb500 189px)"></div><div style="top:153px;height:3px;background:linear-gradient(90deg,#d6ff01 0px,#fffc00 61px,#ffc100 160px,#ffb400 189px)"></div><div style="top:156px;height:3px;background:linear-gradient(90deg,#d7ff01 0px,#fffc00 60px,#ffc100 159px,#ffb300 189px)"></div><div style="top:159px;height:3px;background:linear-gradient(90deg,#d8ff02 0px,#fffc00 58px,#ffc100 156px,#ffb200 189px)"></div><div style="top:162px;height:3px;background:linear-gradient(90deg,#d9ff02 0px,#fffc00 56px,#ffc100 154px,#ffb100 189px)"></div><div style="top:165px;height:3px;background:linear-gradient(90deg,#daff03 0px,#fffc00 54px,#ffc100 152px,#ffb000 189px)"></div><div style="top:168px;height:3px;background:linear-gradient(90deg,#dcff03 0px,#fffc00 52px,#ffc200 149px,#ffaf00 189px)"></div><div style="top:171px;height:3px;background:linear-gradient(90deg,#ddff04 0px,#fffc00 51px,#ffc100 149px,#ffae00 189px)"></div><div style="top:174px;height:3px;background:linear-gradient(90deg,#deff05 0px,#fffc00 49px,#ffc100 146px,#ffae00 189px)"></div><div style="top:177px;height:3px;background:linear-gradient(90deg,#dfff05 0px,#fffc00 47px,#ffc100 144px,#ffad00 189px)"></div><div style="top:180px;height:3px;background:linear-gradient(90deg,#e1ff06 0px,#fffc00 45px,#ffc100 142px,#ffac00 189px)"></div><div style="top:183px;height:3px;background:linear-gradient(90deg,#e2ff06 0px,#fffc00 43px,#ffc200 139px,#ffab00 189px)"></div><div style="top:186px;height:2px;background:linear-gradient(90deg,#e3ff07 0px,#fffc00 42px,#ffc100 138px,#fa0 189px)"></div></div></div><svg width="1715" height="887" viewBox="0 0 1715 887" style="position:absolute;left:0;top:0"><path d="M1176.1 588.7L1175.9 588.8L1175.8 588.8L1175.6 588.8L1175.4 588.9L1175.3 588.9L1175.3 588.9L1175.3 588.9L1175.2 588.9L1175.1 588.9L1175 588.9L1175 588.9L1174.9 588.9L1174.8 588.9L1174.7 588.9L1174.6 588.9L1174.5 588.9L1174.4 588.8L1174.2 588.8L1174.1 588.8L1173.9 588.7L1173.7 588.6L1173.5 588.5L1173.3 588.4L1173.1 588.3L1172.8 588.1L1172.5 587.9L1172.3 587.8L1171.9 587.6L1171.6 587.3L1171.2 587.1L1170.8 586.8L1170.4 586.5L1169.9 586.2L1169.4 585.8L1168.9 585.5L1168.4 585.1L1167.8 584.7L1167.2 584.2L1166.5 583.8L1165.7 583.3L1164.9 582.7L1164.1 582.1L1163.1 581.5L1162.2 580.8L1161.1 580.1L1160.1 579.4L1158.9 578.6L1157.7 577.7L1156.4 576.8L1155.1 575.8L1153.7 574.6L1152.2 573.4L1150.6 572L1149 570.6L1147.3 569L1145.4 567L1143.4 564.7L1141.2 562.2L1138.9 559.3L1136.4 555.9L1133.7 552.1L1130.9 547.9L1128 543.2L1124.8 537.8L1121.5 531.8L1118 525.1L1114.3 517.6L1110.3 509.3L1106.1 500L1101.6 490L1097 479L1092.4 466.9L1087.7 453.8L1083.1 439.5L1078.4 424.3L1073.9 408.3L1069.3 391.1L1064.8 372.8L1060.4 354L1056.5 335L1052.9 315.7L1049.5 295.8L1046.6 276L1044.3 256.8L1042.6 237.9L1041.3 219.4L1040.7 201.4L1040.9 184.3L1041.8 168.1L1043.4 152.5L1045.8 138L1048.8 124.9L1052.8 113.3L1057.5 102.8L1062.9 93.8L1068.7 86.5L1075.1 80.9L1082 77L1089.3 74.4L1096.8 72.9L1104.5 72.6L1112.4 73.6L1120.5 75.5L1128.5 77.6L1136.5 80.2L1144.7 83.3L1152.7 86.7L1160.7 90.3L1168.4 93.8L1176 97.6L1183.5 101.4L1191 105.4L1198.4 109.5L1205.7 113.7L1212.9 118L1220.1 122.4L1227.4 126.9L1234.6 131.5L1241.7 136.3L1248.9 141.1L1256 145.9L1263.1 150.9L1270.2 155.9L1277.3 161L1284.4 166.1L1291.5 171.3L1298.6 176.5L1305.7 181.8L1312.8 187.1L1319.9 192.4L1327 197.8L1334.1 203.2L1341.2 208.6L1348.3 214L1355.3 219.5L1362.4 224.9L1369.4 230.3L1376.5 235.8L1383.5 241.2L1390.5 246.6L1397.5 252L1404.4 257.4L1411.2 262.8L1418.1 268.1L1424.8 273.4L1431.6 278.6L1438.2 283.8L1444.8 289L1451.4 294.1L1457.8 299.2L1464.2 304.1L1470.5 309L1476.7 313.9L1482.8 318.6L1488.8 323.3L1494.6 327.8L1500.3 332.3L1505.9 336.7L1511.4 341L1516.6 345.1L1521.7 349L1526.5 352.8L1531.2 356.5L1535.8 360L1540.2 363.5L1544.5 366.8L1548.6 370.1L1552.6 373.1L1556.4 376.1L1559.9 378.8L1563.3 381.5L1566.6 384L1569.7 386.4L1572.6 388.7L1575.3 390.8L1577.9 392.9L1580.4 394.8L1582.7 396.6L1584.9 398.3L1587 400L1589 401.5L1590.8 402.9L1592.6 404.3L1594.2 405.6L1595.8 406.8L1597.3 408L1598.7 409.1L1600 410.1L1601.3 411.1L1602.6 412.1L1603.7 413L1604.9 413.9L1605.9 414.8L1606.9 415.6L1607.9 416.3L1608.8 417L1609.7 417.7L1610.5 418.3L1611.3 418.9L1612 419.5L1612.7 420L1613.3 420.5L1613.9 420.9L1614.4 421.3L1614.9 421.7L1615.4 422.1L1615.8 422.4L1616.2 422.8L1616.6 423.1L1617 423.3L1617.3 423.6L1617.6 423.8L1617.8 424L1618 424.2L1618.2 424.3L1618.4 424.5L1618.6 424.6L1618.8 424.8L1619 424.9L1619.2 425.1L1619.3 425.2L1619.4 425.3L1619.6 425.4L1619.7 425.5L1619.9 425.6L1620 425.7L1620.1 425.8L1620.3 425.9L1620.4 426L1620.5 426.1L1620.6 426.2L1620.7 426.3L1620.8 426.4L1620.9 426.4L1621 426.5L1621.1 426.6L1621.1 426.6L1621.2 426.6L1621.2 426.7L1621.2 426.7L1621.2 426.7L1621.3 426.7L1621.3 426.7L1621.3 426.7ZM1577.9 392.3L1248.3 163L1156.9 553.5Z" fill="#000" fill-opacity=".4" fill-rule="evenodd"/><clipPath id="ic"><rect x="1516" y="71" width="189" height="188"/></clipPath><path d="M837.5 1720.2L837.4 1720.3L837.1 1720.4L836.8 1720.4L836.4 1720.5L836.1 1720.6L835.7 1720.7L835.4 1720.8L835.2 1720.8L835 1720.9L834.9 1720.9L834.8 1720.9L834.7 1720.9L834.6 1720.8L834.5 1720.8L834.4 1720.8L834.3 1720.8L834.2 1720.8L834.1 1720.8L833.9 1720.8L833.8 1720.8L833.6 1720.8L833.5 1720.8L833.3 1720.8L833.1 1720.8L833 1720.8L832.8 1720.8L832.6 1720.9L832.5 1720.9L832.3 1720.9L832.1 1720.9L831.9 1720.9L831.7 1720.8L831.5 1720.8L831.2 1720.7L831 1720.6L830.8 1720.5L830.5 1720.4L830.2 1720.3L829.9 1720.1L829.6 1719.9L829.3 1719.8L828.9 1719.5L828.5 1719.3L828.1 1719.1L827.7 1718.8L827.3 1718.5L826.9 1718.2L826.4 1717.9L825.9 1717.6L825.5 1717.2L825 1716.8L824.5 1716.5L824 1716.1L823.5 1715.6L822.9 1715.2L822.3 1714.7L821.7 1714.1L821 1713.6L820.3 1713L819.6 1712.4L818.8 1711.8L818.1 1711.1L817.3 1710.4L816.4 1709.7L815.6 1708.9L814.8 1708.2L813.9 1707.4L813 1706.5L812.1 1705.7L811.2 1704.8L810.2 1703.9L809.1 1703L808 1702L807 1701L805.8 1700L804.7 1699L803.4 1697.9L802.2 1696.8L800.8 1695.7L799.5 1694.5L798 1693.2L796.5 1691.9L794.9 1690.5L793.3 1689.1L791.6 1687.7L789.9 1686.2L788.1 1684.6L786.3 1683L784.4 1681.4L782.5 1679.7L780.5 1678L778.5 1676.3L776.5 1674.4L774.3 1672.5L772.1 1670.5L769.9 1668.4L767.5 1666.2L765.1 1663.9L762.7 1661.5L760.1 1659.1L757.5 1656.5L754.9 1653.8L752.2 1650.9L749.3 1647.9L746.5 1644.7L743.6 1641.6L740.7 1638.3L737.7 1634.9L734.6 1631.3L731.4 1627.3L728 1622.9L724.4 1618L720.7 1612.7L716.9 1607.2L712.9 1601.4L708.8 1595.2L704.6 1588.6L700.2 1581.5L695.7 1573.8L691 1565.5L686.2 1556.8L681.3 1547.7L676.3 1538.2L671.1 1528.2L665.7 1517.5L660.2 1506L654.5 1493.8L648.6 1480.6L642.5 1466.6L636.2 1451.9L629.8 1436.6L623.2 1420.5L616.5 1403.4L609.5 1385.4L602.3 1366.3L594.9 1346.1L587.3 1324.8L579.3 1302.6L571.1 1279.5L562.7 1255.3L554.3 1230L545.7 1203.6L537.2 1175.9L528.7 1146.8L520.3 1116.5L511.7 1084.8L503.1 1051.9L494.5 1017.8L485.8 982.6L477.3 946.2L468.8 908.9L460.5 870.5L452.1 830.9L443.7 789.7L435.2 747.3L426.9 703.9L418.7 659.7L410.9 615.1L403.4 570.4L396.3 525.7L389.5 480.6L383 434.6L376.6 388.1L370.6 341.3L365.1 294.5L359.9 248.1L355.4 202.3L351.5 157.4L348.1 113L345.1 68.8L342.5 24.8L340.5 -18.7L339.1 -61.5L338.3 -103.4L338.2 -144.2L338.9 -183.7L340.2 -222.2L342.2 -260.2L344.8 -297.3L348.1 -333.4L352.1 -368.3L356.8 -401.7L362.1 -433.4L368.2 -463.2L375 -491.3L382.7 -518.1L391.1 -543.5L400.1 -567.2L409.8 -589.3L419.9 -609.6L430.5 -627.9L441.4 -644.3L452.8 -658.5L464.9 -670.5L477.5 -680.6L490.5 -688.9L503.9 -695.7L517.6 -701L531.3 -705.1L545.1 -708.1L559.1 -709.7L573.4 -709.5L587.9 -707.7L602.6 -704.7L617.5 -700.7L632.4 -696.1L647.2 -691L662 -685.9L676.8 -680.3L691.7 -673.9L706.7 -666.8L721.7 -659.2L736.6 -651.2L751.5 -643L766.2 -634.7L780.7 -626.4L795 -618.1L809.3 -609.6L823.4 -600.9L837.4 -592.1L851.3 -583.1L865.1 -573.9L878.9 -564.6L892.6 -555.2L906.3 -545.7L919.9 -536L933.3 -526.2L946.8 -516.3L960.1 -506.2L973.5 -496L986.8 -485.6L1000.2 -475.2L1013.5 -464.6L1026.8 -453.9L1040.1 -443.1L1053.4 -432.1L1066.6 -421.1L1079.8 -409.9L1093 -398.6L1106.2 -387.3L1119.4 -375.9L1132.5 -364.4L1145.7 -352.8L1158.8 -341.1L1171.9 -329.3L1184.9 -317.4L1198 -305.5L1211.1 -293.6L1224.2 -281.5L1237.3 -269.4L1250.4 -257.3L1263.4 -245.1L1276.5 -232.8L1289.6 -220.5L1302.6 -208.1L1315.7 -195.7L1328.8 -183.2L1341.9 -170.7L1355.1 -158.2L1368.2 -145.6L1381.3 -132.9L1394.4 -120.3L1407.5 -107.6L1420.6 -94.9L1433.7 -82.2L1446.7 -69.4L1459.8 -56.7L1472.8 -43.9L1485.9 -31.1L1498.9 -18.2L1511.9 -5.4L1524.9 7.4L1537.9 20.1L1550.9 33L1563.9 45.8L1576.9 58.6L1589.9 71.4L1602.9 84.1L1615.8 96.9L1628.6 109.6L1641.5 122.3L1654.3 135L1667 147.7L1679.8 160.4L1692.5 173L1705.1 185.6L1717.8 198.2L1730.3 210.7L1742.8 223.2L1755.3 235.6L1767.7 248L1780.1 260.3L1792.5 272.6L1804.7 284.9L1816.9 297.1L1829.1 309.1L1841.1 321.2L1853.1 333.2L1865.1 345.1L1877 356.9L1888.8 368.7L1900.5 380.4L1912.2 392L1923.7 403.5L1935.1 414.9L1946.5 426.2L1957.9 437.4L1969.1 448.6L1980.2 459.6L1991.2 470.5L2002 481.3L2012.8 492L2023.4 502.6L2033.9 513L2044.2 523.4L2054.5 533.7L2064.6 543.8L2074.6 553.8L2084.3 563.6L2093.9 573.1L2103.3 582.5L2112.5 591.7L2121.6 600.7L2130.4 609.5L2139.1 618.2L2147.7 626.7L2156.2 635.2L2164.5 643.5L2172.8 651.7L2180.9 659.8L2188.9 667.7L2196.8 675.6L2204.5 683.3L2212.1 690.8L2219.5 698.1L2226.7 705.3L2233.7 712.2L2240.5 719L2247.2 725.6L2253.7 732L2260.1 738.3L2266.3 744.4L2272.3 750.4L2278.2 756.3L2284 762L2289.6 767.6L2295 773L2300.3 778.3L2305.5 783.5L2310.5 788.5L2315.4 793.4L2320.1 798.2L2324.7 802.8L2329.2 807.3L2333.6 811.6L2337.8 815.8L2341.9 819.9L2345.8 823.9L2349.7 827.8L2353.5 831.6L2357.2 835.2L2360.8 838.8L2364.2 842.2L2367.6 845.5L2370.9 848.7L2374 851.9L2377.2 854.9L2380.2 857.9L2383.1 860.9L2386 863.7L2388.7 866.5L2391.4 869.2L2394 871.8L2396.6 874.3L2399.1 876.9L2401.6 879.3L2404 881.8L2406.4 884.1L2408.7 886.4L2410.9 888.7L2413.1 890.9L2415.3 893L2417.4 895.1L2419.4 897.2L2421.5 899.2L2423.4 901.2L2425.3 903.1L2427.2 904.9L2429 906.7L2430.7 908.5L2432.4 910.2L2434.1 911.9L2435.7 913.5L2437.3 915L2438.8 916.5L2440.3 917.9L2441.8 919.3L2443.2 920.7L2444.5 922L2445.8 923.3L2447.1 924.5L2448.3 925.7L2449.4 926.9L2450.5 928L2451.6 929L2452.6 930.1L2453.6 931.1L2454.6 932.1L2455.6 933L2456.5 933.9L2457.4 934.8L2458.2 935.7L2459 936.5L2459.8 937.3L2460.6 938.1L2461.3 938.8L2462.1 939.5L2462.8 940.2L2463.4 940.9L2464.1 941.5L2464.7 942.1L2465.2 942.7L2465.8 943.3L2466.3 943.8L2466.8 944.3L2467.3 944.7L2467.7 945.2L2468.1 945.5L2468.5 945.9L2468.8 946.3L2469.2 946.6L2469.6 947L2469.9 947.4L2470.3 947.7L2470.6 948.1L2470.9 948.4L2471.3 948.7L2471.6 949L2471.9 949.3L2472.2 949.6L2472.5 949.9L2472.7 950.2L2473 950.5L2473.3 950.7L2473.5 951L2473.7 951.2L2474 951.4L2474.2 951.7L2474.5 952L2474.8 952.2L2475 952.5L2475.3 952.7L2475.5 953L2475.8 953.3L2476 953.5L2476.3 953.7L2476.5 954L2476.8 954.2L2477 954.5L2477.2 954.7L2477.4 954.9L2477.7 955.1L2477.9 955.3L2478 955.5L2478.2 955.7L2478.4 955.9L2478.6 956L2478.7 956.2L2478.8 956.3L2479 956.4L2479.1 956.6L2479.2 956.7L2479.3 956.8L2479.4 956.9L2479.5 957L2479.6 957L2479.6 957.1L2479.7 957.2L2479.8 957.2L2479.8 957.3L2479.9 957.3L2479.9 957.4L2480 957.4L2480 957.4L2480 957.5L2480.1 957.5L2480.1 957.5L2480.1 957.6ZM2319.8 797.3L1103.9 -286.8L766.9 1559.1Z" fill="#000" fill-opacity=".4" fill-rule="evenodd" clip-path="url(#ic)"/><rect x="1514" y="69.2" width="193.6" height="192.3" fill="none" stroke="#2c2c2c" stroke-width="2"/><rect x="1515.4" y="70.2" width="190" height="189.3" fill="none" stroke="#a0a0a0" stroke-width="1.2"/><rect x="1241.3" y="155.3" width="14.4" height="14.4" fill="none" stroke="#fff" stroke-opacity=".97" stroke-width="1.3"/><rect x="1248.2" y="204" width="14.4" height="14.4" fill="none" stroke="#fff" stroke-opacity=".97" stroke-width="1.3"/><rect x="1256.8" y="244.6" width="14.4" height="14.4" fill="none" stroke="#fff" stroke-opacity=".97" stroke-width="1.3"/><rect x="1263.9" y="288.2" width="14.4" height="14.4" fill="none" stroke="#fff" stroke-opacity=".97" stroke-width="1.3"/><rect x="1270.8" y="334.9" width="14.4" height="14.4" fill="none" stroke="#fff" stroke-opacity=".97" stroke-width="1.3"/><rect x="1378.6" y="250.1" width="14.4" height="14.4" fill="none" stroke="#fff" stroke-opacity=".97" stroke-width="1.3"/><rect x="1357.8" y="277.1" width="14.4" height="14.4" fill="none" stroke="#fff" stroke-opacity=".97" stroke-width="1.3"/><rect x="1336.9" y="303.8" width="14.4" height="14.4" fill="none" stroke="#fff" stroke-opacity=".97" stroke-width="1.3"/><rect x="1318.4" y="329.3" width="14.4" height="14.4" fill="none" stroke="#fff" stroke-opacity=".97" stroke-width="1.3"/><rect x="1298.8" y="352.8" width="14.4" height="14.4" fill="none" stroke="#fff" stroke-opacity=".97" stroke-width="1.3"/><rect x="1189.3" y="376.7" width="14.4" height="14.4" fill="none" stroke="#fff" stroke-opacity=".97" stroke-width="1.3"/><rect x="1207.8" y="378.3" width="14.4" height="14.4" fill="none" stroke="#fff" stroke-opacity=".97" stroke-width="1.3"/><rect x="1224.1" y="378.3" width="14.4" height="14.4" fill="none" stroke="#fff" stroke-opacity=".97" stroke-width="1.3"/><rect x="1242.8" y="378.3" width="14.4" height="14.4" fill="none" stroke="#fff" stroke-opacity=".97" stroke-width="1.3"/><rect x="1260.8" y="378.3" width="14.4" height="14.4" fill="none" stroke="#fff" stroke-opacity=".97" stroke-width="1.3"/><rect x="1336.9" y="379.8" width="14.4" height="14.4" fill="none" stroke="#fff" stroke-opacity=".97" stroke-width="1.3"/><rect x="1391.4" y="380.6" width="14.4" height="14.4" fill="none" stroke="#fff" stroke-opacity=".97" stroke-width="1.3"/><rect x="1451.8" y="382.3" width="14.4" height="14.4" fill="none" stroke="#fff" stroke-opacity=".97" stroke-width="1.3"/><rect x="1504.8" y="383.8" width="14.4" height="14.4" fill="none" stroke="#fff" stroke-opacity=".97" stroke-width="1.3"/><rect x="1570.8" y="385.1" width="14.4" height="14.4" fill="none" stroke="#fff" stroke-opacity=".97" stroke-width="1.3"/><rect x="1281.8" y="400.8" width="14.4" height="14.4" fill="none" stroke="#fff" stroke-opacity=".97" stroke-width="1.3"/><rect x="1286.3" y="423.3" width="14.4" height="14.4" fill="none" stroke="#fff" stroke-opacity=".97" stroke-width="1.3"/><rect x="1290.2" y="445.1" width="14.4" height="14.4" fill="none" stroke="#fff" stroke-opacity=".97" stroke-width="1.3"/><rect x="1293.2" y="466.3" width="14.4" height="14.4" fill="none" stroke="#fff" stroke-opacity=".97" stroke-width="1.3"/><rect x="1297.3" y="488.8" width="14.4" height="14.4" fill="none" stroke="#fff" stroke-opacity=".97" stroke-width="1.3"/><rect x="1252.4" y="411.8" width="14.4" height="14.4" fill="none" stroke="#fff" stroke-opacity=".97" stroke-width="1.3"/><rect x="1227.3" y="445.2" width="14.4" height="14.4" fill="none" stroke="#fff" stroke-opacity=".97" stroke-width="1.3"/><rect x="1202.3" y="477.8" width="14.4" height="14.4" fill="none" stroke="#fff" stroke-opacity=".97" stroke-width="1.3"/><rect x="1176.8" y="510.3" width="14.4" height="14.4" fill="none" stroke="#fff" stroke-opacity=".97" stroke-width="1.3"/><rect x="1148.6" y="546.3" width="14.4" height="14.4" fill="none" stroke="#fff" stroke-opacity=".97" stroke-width="1.3"/><rect x="1279.9" y="380.2" width="13.3" height="13.7" fill="none" stroke="#000" stroke-width="1.5"/><rect x="1603.2" y="157.5" width="14.4" height="14.4" fill="none" stroke="#fff" stroke-opacity=".97" stroke-width="1.3"/><circle cx="1263.8" cy="206" r="4.3" fill="rgb(10,160,10)" stroke="#000" stroke-width="1.2"/><circle cx="1267.8" cy="237.8" r="4.3" fill="rgb(70,190,70)" stroke="#000" stroke-width="1.2"/><circle cx="1274" cy="274.8" r="4.3" fill="rgb(100,195,100)" stroke="#000" stroke-width="1.2"/><circle cx="1279.1" cy="310" r="4.3" fill="rgb(125,190,115)" stroke="#000" stroke-width="1.2"/><circle cx="1283.4" cy="345.9" r="4.3" fill="rgb(150,185,140)" stroke="#000" stroke-width="1.2"/><circle cx="1377.5" cy="275" r="4.3" fill="rgb(200,200,0)" stroke="#000" stroke-width="1.2"/><circle cx="1361" cy="297" r="4.3" fill="rgb(190,185,60)" stroke="#000" stroke-width="1.2"/><circle cx="1342.4" cy="319.6" r="4.3" fill="rgb(190,185,90)" stroke="#000" stroke-width="1.2"/><circle cx="1326" cy="340.2" r="4.3" fill="rgb(190,185,120)" stroke="#000" stroke-width="1.2"/><circle cx="1309" cy="361.4" r="4.3" fill="rgb(190,185,150)" stroke="#000" stroke-width="1.2"/><circle cx="1207.9" cy="388.1" r="4.3" fill="rgb(0,175,190)" stroke="#000" stroke-width="1.2"/><circle cx="1225" cy="387" r="4.3" fill="rgb(90,185,190)" stroke="#000" stroke-width="1.2"/><circle cx="1241.4" cy="387" r="4.3" fill="rgb(125,185,180)" stroke="#000" stroke-width="1.2"/><circle cx="1256.9" cy="387" r="4.3" fill="rgb(150,185,180)" stroke="#000" stroke-width="1.2"/><circle cx="1271.9" cy="387" r="4.3" fill="rgb(165,180,175)" stroke="#000" stroke-width="1.2"/><circle cx="1342.4" cy="385" r="4.3" fill="rgb(200,130,130)" stroke="#000" stroke-width="1.2"/><circle cx="1391.4" cy="385" r="4.3" fill="rgb(200,100,100)" stroke="#000" stroke-width="1.2"/><circle cx="1450.4" cy="385" r="4.3" fill="rgb(205,75,75)" stroke="#000" stroke-width="1.2"/><circle cx="1505" cy="385" r="4.3" fill="rgb(205,50,50)" stroke="#000" stroke-width="1.2"/><circle cx="1558.5" cy="385" r="4.3" fill="rgb(195,0,0)" stroke="#000" stroke-width="1.2"/><circle cx="1291.8" cy="406.5" r="4.3" fill="rgb(185,160,185)" stroke="#000" stroke-width="1.2"/><circle cx="1295" cy="427.7" r="4.3" fill="rgb(195,140,190)" stroke="#000" stroke-width="1.2"/><circle cx="1297.9" cy="448.4" r="4.3" fill="rgb(200,110,190)" stroke="#000" stroke-width="1.2"/><circle cx="1301.7" cy="470.9" r="4.3" fill="rgb(200,80,190)" stroke="#000" stroke-width="1.2"/><circle cx="1305" cy="495.1" r="4.3" fill="rgb(195,0,195)" stroke="#000" stroke-width="1.2"/><circle cx="1264.8" cy="418" r="4.3" fill="rgb(160,160,200)" stroke="#000" stroke-width="1.2"/><circle cx="1239" cy="451" r="4.3" fill="rgb(140,140,215)" stroke="#000" stroke-width="1.2"/><circle cx="1213.4" cy="483.4" r="4.3" fill="rgb(110,110,215)" stroke="#000" stroke-width="1.2"/><circle cx="1183.9" cy="521.5" r="4.3" fill="rgb(85,85,205)" stroke="#000" stroke-width="1.2"/><circle cx="1154.4" cy="557.9" r="4.3" fill="rgb(0,0,200)" stroke="#000" stroke-width="1.2"/><circle cx="1288" cy="388.1" r="4.3" fill="rgb(255,255,255)" stroke="#000" stroke-width="1.2"/><circle cx="1581.9" cy="244" r="4.4" fill="rgb(200,200,0)" stroke="#000" stroke-width="1.1"/></svg></div></body></html>
